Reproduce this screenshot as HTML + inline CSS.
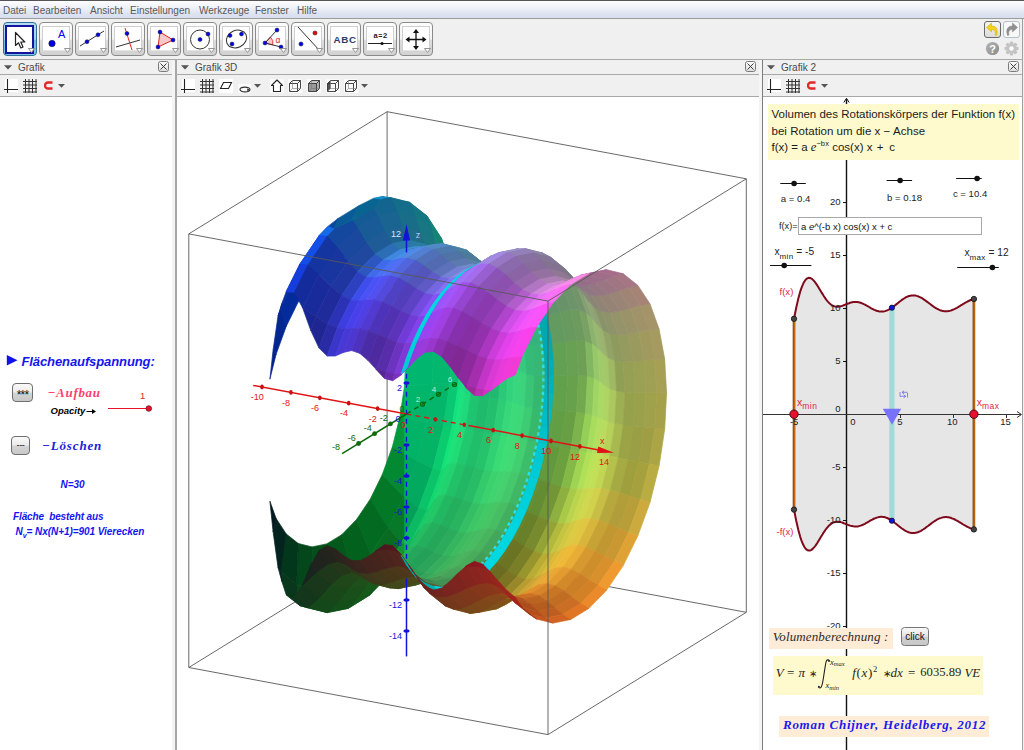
<!DOCTYPE html>
<html><head><meta charset="utf-8"><title>GeoGebra</title>
<style>
html,body{margin:0;padding:0;background:#fff;}
body{width:1024px;height:750px;position:relative;overflow:hidden;font-family:"Liberation Sans",sans-serif;}
.abs{position:absolute;}
#menubar{position:absolute;left:0;top:0;width:1024px;height:18px;background:linear-gradient(#fdfdfe 0px,#eef1f8 7px,#dfe4f1 12px,#d6dcec 18px);border-top:1px solid #555;box-sizing:border-box;}
#menubar span{position:absolute;top:3.5px;font-size:10px;color:#5a5a5a;white-space:nowrap;}
#menuline{position:absolute;left:0;top:18px;width:1024px;height:1px;background:#9c9c9c;}
#toolbar{position:absolute;left:0;top:19px;width:1024px;height:40px;background:#f0f0f0;}
.tb{position:absolute;top:3px;width:34px;height:34px;border:1px solid #8a8a8a;border-radius:4px;box-sizing:border-box;background:linear-gradient(#fdfdfd,#f4f4f4 50%,#dcdcdc 55%,#d2d2d2);}
.tb .in{position:absolute;left:2px;top:3px;width:26px;height:23px;background:#fff;border:1px solid #cfcfcf;border-bottom-color:#e4e4e4;box-sizing:content-box;}
.tb .in svg{position:absolute;left:0;top:0;}
.tb.sel{border-color:#2f6f98;background:linear-gradient(#b4dcf2,#9fd2ee 50%,#6cbce6 55%,#7cc4ea);}
.tb.sel .in{left:1px;top:2px;width:25px;height:25px;border:2px solid #14149c;background:#fff;}
.tb .tri{position:absolute;right:1px;bottom:2px;}
.pt{position:absolute;top:60px;height:14px;background:#f0f0f0;}
.pt span{position:absolute;left:18px;top:1px;font-size:10px;color:#4a4a4a;line-height:14px;}
.pt .dd{position:absolute;left:4px;top:5px;}
.pt .cl{position:absolute;top:1px;width:11px;height:11px;border:1px solid #7a7a7a;border-radius:2.5px;box-sizing:border-box;background:linear-gradient(#fbfbfb,#dedede);}
.pt .cl svg{position:absolute;left:0;top:0;}
.si{position:absolute;top:79px;}
.hline{position:absolute;height:1px;background:#a8a8a8;}
.vline{position:absolute;width:1px;background:#a8a8a8;}
.sb{position:absolute;top:75px;height:21px;background:#f0f0f0;}
</style></head><body>
<div id="menubar">
<span style="left:3px">Datei</span><span style="left:33px">Bearbeiten</span><span style="left:90px">Ansicht</span><span style="left:130px">Einstellungen</span><span style="left:199px">Werkzeuge</span><span style="left:255px">Fenster</span><span style="left:297px">Hilfe</span>
</div>
<div id="menuline"></div>
<div id="toolbar">
<div class="tb sel" style="left:2.5px"><div class="in"><svg width="24" height="26" viewBox="0 0 24 26"><path d="M8.5 5.5V18.5L11.5 15.8L13.8 21L16 20L13.8 15H17.8Z" fill="#fff" stroke="#222" stroke-width="1.2" stroke-linejoin="round"/></svg></div><svg class="tri" width="7" height="5" viewBox="0 0 7 5"><path d="M0.5 0.5H6.5L3.5 4.5Z" fill="#fff" stroke="#888" stroke-width="0.9"/></svg></div>
<div class="tb" style="left:38.5px"><div class="in"><svg width="26" height="24" viewBox="0 0 26 24"><circle cx="9" cy="16.5" r="3.2" fill="#0000ee" stroke="#222" stroke-width="0.6"/><text x="15" y="10.5" font-family="Liberation Sans" font-size="11" fill="#0000ee">A</text></svg></div><svg class="tri" width="7" height="5" viewBox="0 0 7 5"><path d="M0.5 0.5H6.5L3.5 4.5Z" fill="#fff" stroke="#888" stroke-width="0.9"/></svg></div>
<div class="tb" style="left:74.5px"><div class="in"><svg width="26" height="24" viewBox="0 0 26 24"><path d="M1 19L25 4" stroke="#333" stroke-width="1"/><circle cx="8" cy="14.7" r="2" fill="#0000ee" stroke="#222" stroke-width="0.5"/><circle cx="19" cy="7.8" r="2" fill="#0000ee" stroke="#222" stroke-width="0.5"/></svg></div><svg class="tri" width="7" height="5" viewBox="0 0 7 5"><path d="M0.5 0.5H6.5L3.5 4.5Z" fill="#fff" stroke="#888" stroke-width="0.9"/></svg></div>
<div class="tb" style="left:110.5px"><div class="in"><svg width="26" height="24" viewBox="0 0 26 24"><path d="M1 20L25 13" stroke="#333" stroke-width="1"/><path d="M10 1L17 23" stroke="#ee2222" stroke-width="1"/><circle cx="12" cy="6.5" r="2" fill="#0000ee" stroke="#222" stroke-width="0.5"/></svg></div><svg class="tri" width="7" height="5" viewBox="0 0 7 5"><path d="M0.5 0.5H6.5L3.5 4.5Z" fill="#fff" stroke="#888" stroke-width="0.9"/></svg></div>
<div class="tb" style="left:146.5px"><div class="in"><svg width="26" height="24" viewBox="0 0 26 24"><path d="M9 5L22 13L7 20Z" fill="#f6c8c8" stroke="#dd2222" stroke-width="1"/><circle cx="9" cy="5" r="2" fill="#0000ee" stroke="#222" stroke-width="0.5"/><circle cx="22" cy="13" r="2" fill="#0000ee" stroke="#222" stroke-width="0.5"/><circle cx="7" cy="20" r="2" fill="#0000ee" stroke="#222" stroke-width="0.5"/></svg></div><svg class="tri" width="7" height="5" viewBox="0 0 7 5"><path d="M0.5 0.5H6.5L3.5 4.5Z" fill="#fff" stroke="#888" stroke-width="0.9"/></svg></div>
<div class="tb" style="left:182.5px"><div class="in"><svg width="26" height="24" viewBox="0 0 26 24"><circle cx="13" cy="12.5" r="9.5" fill="none" stroke="#333" stroke-width="1"/><circle cx="13" cy="12.5" r="2" fill="#0000ee" stroke="#222" stroke-width="0.5"/><circle cx="21" cy="7" r="2" fill="#0000ee" stroke="#222" stroke-width="0.5"/></svg></div><svg class="tri" width="7" height="5" viewBox="0 0 7 5"><path d="M0.5 0.5H6.5L3.5 4.5Z" fill="#fff" stroke="#888" stroke-width="0.9"/></svg></div>
<div class="tb" style="left:218.5px"><div class="in"><svg width="26" height="24" viewBox="0 0 26 24"><ellipse cx="13.5" cy="12" rx="10.5" ry="8.5" transform="rotate(-25 13.5 12)" fill="none" stroke="#333" stroke-width="1"/><circle cx="9" cy="17" r="2" fill="#0000ee" stroke="#222" stroke-width="0.5"/><circle cx="18.5" cy="7" r="2" fill="#0000ee" stroke="#222" stroke-width="0.5"/><circle cx="7" cy="8.5" r="2" fill="#0000ee" stroke="#222" stroke-width="0.5"/></svg></div><svg class="tri" width="7" height="5" viewBox="0 0 7 5"><path d="M0.5 0.5H6.5L3.5 4.5Z" fill="#fff" stroke="#888" stroke-width="0.9"/></svg></div>
<div class="tb" style="left:254.5px"><div class="in"><svg width="26" height="24" viewBox="0 0 26 24"><path d="M6 16L11.4 10.1A8 8 0 0 1 13.8 17.9Z" fill="#f6c8c8" stroke="#dd2222" stroke-width="0.8"/><path d="M18 3L6 16L22 20" fill="none" stroke="#333" stroke-width="1"/><circle cx="18" cy="3" r="2" fill="#0000ee" stroke="#222" stroke-width="0.5"/><circle cx="6" cy="16" r="2" fill="#0000ee" stroke="#222" stroke-width="0.5"/><circle cx="22" cy="20" r="2" fill="#0000ee" stroke="#222" stroke-width="0.5"/><text x="16.5" y="15.5" font-family="Liberation Sans" font-size="8.5" fill="#dd2222">α</text></svg></div><svg class="tri" width="7" height="5" viewBox="0 0 7 5"><path d="M0.5 0.5H6.5L3.5 4.5Z" fill="#fff" stroke="#888" stroke-width="0.9"/></svg></div>
<div class="tb" style="left:290.5px"><div class="in"><svg width="26" height="24" viewBox="0 0 26 24"><path d="M3 0L25 24" stroke="#333" stroke-width="1"/><circle cx="20" cy="6" r="2.1" fill="#ee0000" stroke="#222" stroke-width="0.5"/><circle cx="6" cy="17" r="2.1" fill="#0000ee" stroke="#222" stroke-width="0.5"/></svg></div><svg class="tri" width="7" height="5" viewBox="0 0 7 5"><path d="M0.5 0.5H6.5L3.5 4.5Z" fill="#fff" stroke="#888" stroke-width="0.9"/></svg></div>
<div class="tb" style="left:326.5px"><div class="in"><svg width="26" height="24" viewBox="0 0 26 24"><text x="2.5" y="16" font-family="Liberation Sans" font-size="9.8" font-weight="bold" fill="#2c3a68" letter-spacing="0.7">ABC</text></svg></div><svg class="tri" width="7" height="5" viewBox="0 0 7 5"><path d="M0.5 0.5H6.5L3.5 4.5Z" fill="#fff" stroke="#888" stroke-width="0.9"/></svg></div>
<div class="tb" style="left:362.5px"><div class="in"><svg width="26" height="24" viewBox="0 0 26 24"><text x="6.5" y="11" font-family="Liberation Sans" font-size="7.5" font-weight="bold" fill="#222">a</text><text x="11.3" y="10.5" font-family="Liberation Sans" font-size="7" font-weight="bold" fill="#222">=</text><text x="16" y="11" font-family="Liberation Sans" font-size="7.5" font-weight="bold" fill="#222">2</text><path d="M1 16.5H25" stroke="#222" stroke-width="1"/><circle cx="15" cy="16.5" r="1.6" fill="#111"/></svg></div><svg class="tri" width="7" height="5" viewBox="0 0 7 5"><path d="M0.5 0.5H6.5L3.5 4.5Z" fill="#fff" stroke="#888" stroke-width="0.9"/></svg></div>
<div class="tb" style="left:398.5px"><div class="in"><svg width="26" height="24" viewBox="0 0 26 24"><path d="M13 4V21M4.5 12.5H21.5" stroke="#111" stroke-width="1.3"/><path d="M13 2L16 6H10ZM13 23L16 19H10ZM2.5 12.5L6.5 9.5V15.5ZM23.5 12.5L19.5 9.5V15.5Z" fill="#111"/></svg></div><svg class="tri" width="7" height="5" viewBox="0 0 7 5"><path d="M0.5 0.5H6.5L3.5 4.5Z" fill="#fff" stroke="#888" stroke-width="0.9"/></svg></div>

<div class="abs" style="left:984px;top:2px;width:17px;height:17px;border:1px solid #6a6a6a;border-radius:3px;box-sizing:border-box;background:linear-gradient(#f6f6f6,#dcdcdc)"></div>
<svg class="abs" style="left:985px;top:3px" width="15" height="15" viewBox="0 0 15 15"><path d="M1.5 5.5L6.5 1V4C11 4 13.5 7 11.5 13.5L10 13C11 9.5 9.5 7.6 6.5 7.6V10Z" fill="#f2d21c" stroke="#d8b400" stroke-width="0.6" stroke-linejoin="round"/></svg>
<div class="abs" style="left:1003px;top:2px;width:17px;height:17px;border:1px solid #b4c0c8;border-radius:3px;box-sizing:border-box;background:#f8f8f8"></div>
<svg class="abs" style="left:1004px;top:3px" width="15" height="15" viewBox="0 0 15 15"><path d="M13.5 5.5L8.5 1V4C4 4 1.5 7 3.5 13.5L5 13C4 9.5 5.5 7.6 8.5 7.6V10Z" fill="#909090" stroke="#858585" stroke-width="0.5" stroke-linejoin="round"/></svg>
<svg class="abs" style="left:985px;top:22px" width="15" height="15" viewBox="0 0 15 15"><defs><linearGradient id="hg" x1="0" y1="0" x2="1" y2="1"><stop offset="0" stop-color="#b4b4b4"/><stop offset="1" stop-color="#8a8a8a"/></linearGradient></defs><circle cx="7.5" cy="7.5" r="6.6" fill="url(#hg)"/><text x="7.5" y="11.6" text-anchor="middle" font-family="Liberation Sans" font-weight="bold" font-size="11" fill="#fff">?</text></svg>
<svg class="abs" style="left:1004px;top:22px" width="15" height="15" viewBox="0 0 15 15"><g transform="translate(7.5 7.5)"><g fill="#c4c4c4"><rect x="-1.7" y="-7" width="3.4" height="14" rx="1"/><rect x="-1.7" y="-7" width="3.4" height="14" rx="1" transform="rotate(45)"/><rect x="-1.7" y="-7" width="3.4" height="14" rx="1" transform="rotate(90)"/><rect x="-1.7" y="-7" width="3.4" height="14" rx="1" transform="rotate(135)"/><circle r="5"/></g><circle r="2.2" fill="#fdfdfd"/></g></svg>

</div>
<!-- panels frame -->
<div class="abs" style="left:0;top:59px;width:1024px;height:691px;background:#f0f0f0"></div>
<div class="hline" style="left:0;top:59px;width:1024px"></div>
<!-- left panel -->
<div class="pt" style="left:0px;width:172px"><svg class="dd" width="8" height="5" viewBox="0 0 8 5"><path d="M0 0.3H8L4 4.6Z" fill="#555"/></svg><span>Grafik</span><div class="cl" style="left:158px"><svg width="9" height="9" viewBox="0 0 9 9"><path d="M1.5 1.5L7.5 7.5M7.5 1.5L1.5 7.5" stroke="#333" stroke-width="0.95"/></svg></div></div><div class="hline" style="left:0px;top:74px;width:172px"></div><div class="sb" style="left:0px;width:172px"></div><svg class="si" style="left:4px" width="14" height="14" viewBox="0 0 14 14"><rect x="1" y="0" width="13" height="13" fill="#fff"/><path d="M3.5 0V14M0 10.5H14" stroke="#222" stroke-width="1.1" fill="none"/></svg><svg class="si" style="left:23px" width="14" height="14" viewBox="0 0 14 14"><path d="M2.5 0V14M6 0V14M9.5 0V14M13 0V14M0 2.5H14M0 6H14M0 9.5H14M0 13H14" stroke="#333" stroke-width="1" fill="none"/></svg><svg class="si" style="left:44px;top:81px" width="9" height="9" viewBox="0 0 9 9"><path d="M8.5 1.5H4A3 3 0 0 0 4 7.5H8.5" stroke="#e02a2a" stroke-width="2.3" fill="none"/></svg><svg class="si" style="left:58px;top:84px" width="7" height="4" viewBox="0 0 7 4"><path d="M0 0H7L3.5 3.8Z" fill="#555"/></svg><div class="hline" style="left:0px;top:96px;width:172px"></div><div class="abs" style="left:0px;top:97px;width:172px;height:653px;background:#fff;overflow:hidden"><div class="abs" style="left:0;top:-97px;width:1024px;height:750px;">
<style>
.bi{position:absolute;font-weight:bold;font-style:italic;color:#1414f0;white-space:nowrap;line-height:1;}
.btn{position:absolute;border:1px solid #6e6e6e;border-radius:4px;box-sizing:border-box;background:linear-gradient(#fafafa,#ececec 45%,#d4d4d4 55%,#c8c8c8);font-size:9px;color:#111;text-align:center;}
</style>
<svg class="abs" style="left:6px;top:354px" width="13" height="13" viewBox="0 0 13 13"><path d="M0.8 1L11.5 6.3L0.8 11.6Z" fill="#1010f0"/></svg>
<div class="bi" style="left:21.5px;top:354.9px;font-size:13px;letter-spacing:-0.1px">Flächenaufspannung:</div>
<div class="btn" style="left:12px;top:383px;width:21px;height:19px;line-height:22px;font-size:12px;letter-spacing:-0.8px">***</div>
<div class="abs" style="left:47.5px;top:385.8px;font-family:'Liberation Serif',serif;font-weight:bold;font-style:italic;font-size:13px;letter-spacing:0.7px;color:#ff3f6e;line-height:1;white-space:nowrap">−Aufbau</div>
<div class="abs" style="left:140px;top:390.5px;font-size:9.5px;color:#e02828;line-height:1">1</div>
<div class="abs" style="left:50.5px;top:406px;font-weight:bold;font-style:italic;font-size:9.5px;color:#000;line-height:1;white-space:nowrap">Opacity</div>
<svg class="abs" style="left:85.5px;top:408.2px" width="11" height="7" viewBox="0 0 11 7"><path d="M0.5 3.5H7" stroke="#000" stroke-width="1"/><path d="M6 1L10 3.5L6 6Z" fill="#000"/></svg>
<svg class="abs" style="left:105px;top:403px" width="50" height="11" viewBox="0 0 50 11"><path d="M3 5.5H44" stroke="#e8142c" stroke-width="1"/><circle cx="43.8" cy="5.5" r="2.8" fill="#ea1030" stroke="#5a1018" stroke-width="0.7"/></svg>
<div class="btn" style="left:11px;top:436px;width:19px;height:19px;line-height:17px;letter-spacing:-0.3px">---</div>
<div class="abs" style="left:42px;top:439.2px;font-family:'Liberation Serif',serif;font-weight:bold;font-style:italic;font-size:13px;letter-spacing:0.85px;color:#2222d8;line-height:1;white-space:nowrap">−Löschen</div>
<div class="bi" style="left:60.5px;top:479.5px;font-size:10px">N=30</div>
<div class="bi" style="left:13px;top:511.5px;font-size:10px;letter-spacing:-0.13px">Fläche&nbsp; besteht aus</div>
<div class="bi" style="left:15.5px;top:526.5px;font-size:10px;letter-spacing:-0.05px">N<span style="font-size:7px;position:relative;top:3px">v</span>= Nx(N+1)=901 Vierecken</div>
</div>
</div><div class="abs" style="left:172px;top:60px;width:3px;height:690px;background:#f4f4f4"></div><div class="abs" style="left:175px;top:60px;width:2px;height:690px;background:#a6a6a6"></div>
<!-- center panel -->
<div class="pt" style="left:177px;width:582px"><svg class="dd" width="8" height="5" viewBox="0 0 8 5"><path d="M0 0.3H8L4 4.6Z" fill="#555"/></svg><span>Grafik 3D</span><div class="cl" style="left:568px"><svg width="9" height="9" viewBox="0 0 9 9"><path d="M1.5 1.5L7.5 7.5M7.5 1.5L1.5 7.5" stroke="#333" stroke-width="0.95"/></svg></div></div><div class="hline" style="left:177px;top:74px;width:582px"></div><div class="sb" style="left:177px;width:582px"></div><svg class="si" style="left:181px" width="14" height="14" viewBox="0 0 14 14"><rect x="1" y="0" width="13" height="13" fill="#fff"/><path d="M3.5 0V14M0 10.5H14" stroke="#222" stroke-width="1.1" fill="none"/></svg><svg class="si" style="left:200px" width="14" height="14" viewBox="0 0 14 14"><path d="M2.5 0V14M6 0V14M9.5 0V14M13 0V14M0 2.5H14M0 6H14M0 9.5H14M0 13H14" stroke="#333" stroke-width="1" fill="none"/></svg><svg class="si" style="left:219px" width="14" height="14" viewBox="0 0 14 14"><rect width="14" height="14" fill="#fff"/><path d="M4.5 3.5H12.5L9.5 9.5H1.5Z" fill="none" stroke="#222" stroke-width="1.1"/></svg><svg class="si" style="left:238px" width="14" height="14" viewBox="0 0 14 14"><rect y="5" width="13" height="9" fill="#fafafa"/><ellipse cx="7" cy="10.5" rx="5" ry="2.4" fill="none" stroke="#333" stroke-width="1.1"/><path d="M9 9.5L12 10.5L9.5 12.5Z" fill="#333"/></svg><svg class="si" style="left:254px;top:84px" width="7" height="4" viewBox="0 0 7 4"><path d="M0 0H7L3.5 3.8Z" fill="#555"/></svg><svg class="si" style="left:270px" width="14" height="14" viewBox="0 0 14 14"><rect width="14" height="14" fill="#fafafa"/><path d="M1.5 6.5L7 1L12.5 6.5H10.5V12.5H3.5V6.5Z" fill="#fff" stroke="#222" stroke-width="1.1" stroke-linejoin="round"/></svg><svg class="si" style="left:288px" width="14" height="14" viewBox="0 0 14 14"><rect width="14" height="14" fill="#fafafa"/><path d="M1.5 4.5H9.5V12.5H1.5ZM1.5 4.5L4.5 1.5H12.5V9.5L9.5 12.5M9.5 4.5L12.5 1.5" fill="none" stroke="#333" stroke-width="0.9"/><path d="M4.5 1.5V9.5H12.5M4.5 9.5L1.5 12.5" fill="none" stroke="#777" stroke-width="0.6"/></svg><svg class="si" style="left:307px" width="14" height="14" viewBox="0 0 14 14"><rect width="14" height="14" fill="#fafafa"/><path d="M1.5 4.5H9.5V12.5H1.5Z" fill="#9a9a9a"/><path d="M1.5 4.5L4.5 1.5H12.5L9.5 4.5Z" fill="#c8c8c8"/><path d="M9.5 4.5L12.5 1.5V9.5L9.5 12.5Z" fill="#b0b0b0"/><path d="M1.5 4.5H9.5V12.5H1.5ZM1.5 4.5L4.5 1.5H12.5V9.5L9.5 12.5M9.5 4.5L12.5 1.5" fill="none" stroke="#333" stroke-width="0.9"/><path d="M4.5 1.5V9.5H12.5M4.5 9.5L1.5 12.5" fill="none" stroke="#777" stroke-width="0.6"/></svg><svg class="si" style="left:326px" width="14" height="14" viewBox="0 0 14 14"><rect width="14" height="14" fill="#fafafa"/><path d="M1.5 4.5L4.5 1.5V9.5L1.5 12.5Z" fill="#555"/><path d="M1.5 4.5H9.5V12.5H1.5ZM1.5 4.5L4.5 1.5H12.5V9.5L9.5 12.5M9.5 4.5L12.5 1.5" fill="none" stroke="#333" stroke-width="0.9"/><path d="M4.5 1.5V9.5H12.5M4.5 9.5L1.5 12.5" fill="none" stroke="#777" stroke-width="0.6"/></svg><svg class="si" style="left:344px" width="14" height="14" viewBox="0 0 14 14"><rect width="14" height="14" fill="#fafafa"/><path d="M1.5 4.5H9.5V12.5H1.5ZM1.5 4.5L4.5 1.5H12.5V9.5L9.5 12.5M9.5 4.5L12.5 1.5" fill="none" stroke="#333" stroke-width="0.9"/><path d="M4.5 1.5V9.5H12.5M4.5 9.5L1.5 12.5" fill="none" stroke="#777" stroke-width="0.6"/></svg><svg class="si" style="left:361px;top:84px" width="7" height="4" viewBox="0 0 7 4"><path d="M0 0H7L3.5 3.8Z" fill="#555"/></svg><div class="hline" style="left:177px;top:96px;width:582px"></div><div class="abs" style="left:177px;top:97px;width:582px;height:653px;background:#fff;overflow:hidden"><div class="abs" style="left:-177px;top:-97px;width:1024px;height:750px;">
<svg class="abs" style="left:0;top:0" width="1024" height="750" viewBox="0 0 1024 750" font-family="Liberation Sans, sans-serif">
<path d="M387.1 545.2L746.3 612.3" stroke="#585858" stroke-width="0.9" fill="none"/>
<path d="M387.1 545.2L188.8 667.5" stroke="#585858" stroke-width="0.9" fill="none"/>
<path d="M387.1 545.2L387.1 111.7" stroke="#585858" stroke-width="0.9" fill="none"/>
<polygon points="399.9,416.8 426.2,422.8 432.1,383.8 404.5,386.2" fill="#039e44" stroke="#039e44" stroke-width="0.7"/>
<polygon points="392.4,446.7 416.6,461.0 426.2,422.8 399.9,416.8" fill="#03993c" stroke="#03993c" stroke-width="0.7"/>
<polygon points="404.5,386.2 432.1,383.8 434.1,345.5 406.1,356.2" fill="#03a14b" stroke="#03a14b" stroke-width="0.7"/>
<polygon points="382.3,474.6 403.8,496.5 416.6,461.0 392.4,446.7" fill="#038932" stroke="#038932" stroke-width="0.7"/>
<polygon points="406.1,356.2 434.1,345.5 432.1,309.7 404.5,328.1" fill="#03a054" stroke="#03a054" stroke-width="0.7"/>
<polygon points="370.2,499.2 388.3,527.9 403.8,496.5 382.3,474.6" fill="#037928" stroke="#037928" stroke-width="0.7"/>
<polygon points="404.5,328.1 432.1,309.7 426.2,278.0 399.9,303.3" fill="#039a5f" stroke="#039a5f" stroke-width="0.7"/>
<polygon points="356.5,519.6 370.8,553.9 388.3,527.9 370.2,499.2" fill="#036b21" stroke="#036b21" stroke-width="0.7"/>
<polygon points="399.9,303.3 426.2,278.0 416.6,251.7 392.4,282.6" fill="#03936a" stroke="#03936a" stroke-width="0.7"/>
<polygon points="341.8,534.7 352.0,573.2 370.8,553.9 356.5,519.6" fill="#03611e" stroke="#03611e" stroke-width="0.7"/>
<polygon points="392.4,282.6 416.6,251.7 403.8,231.9 382.3,267.1" fill="#038476" stroke="#038476" stroke-width="0.7"/>
<polygon points="326.7,543.9 332.9,585.0 352.0,573.2 341.8,534.7" fill="#03581b" stroke="#03581b" stroke-width="0.7"/>
<polygon points="382.3,267.1 403.8,231.9 388.3,219.6 370.2,257.5" fill="#037683" stroke="#037683" stroke-width="0.7"/>
<polygon points="312.0,546.9 314.1,588.8 332.9,585.0 326.7,543.9" fill="#034f1a" stroke="#034f1a" stroke-width="0.7"/>
<polygon points="370.2,257.5 388.3,219.6 370.8,215.3 356.5,254.1" fill="#036d89" stroke="#036d89" stroke-width="0.7"/>
<polygon points="298.3,543.5 296.6,584.4 314.1,588.8 312.0,546.9" fill="#03471a" stroke="#03471a" stroke-width="0.7"/>
<polygon points="356.5,254.1 370.8,215.3 352.0,219.1 341.8,257.1" fill="#036490" stroke="#036490" stroke-width="0.7"/>
<polygon points="286.2,533.9 281.1,572.1 296.6,584.4 298.3,543.5" fill="#03371b" stroke="#03371b" stroke-width="0.7"/>
<polygon points="341.8,257.1 352.0,219.1 332.9,230.9 326.7,266.3" fill="#035b96" stroke="#035b96" stroke-width="0.7"/>
<polygon points="276.1,518.4 273.1,531.7 278.0,567.4 281.1,572.1 286.2,533.9" fill="#03241e" stroke="#03241e" stroke-width="0.7"/>
<polygon points="273.1,531.7 276.1,518.4 269.9,501.2" fill="#031720" stroke="#031720" stroke-width="0.7"/>
<polygon points="326.7,266.3 332.9,230.9 314.1,250.2 312.0,281.4" fill="#03489e" stroke="#03489e" stroke-width="0.7"/>
<polygon points="312.0,281.4 314.1,250.2 296.6,276.1 298.3,301.8" fill="#03359f" stroke="#03359f" stroke-width="0.7"/>
<polygon points="298.3,301.8 296.6,276.1 281.1,307.5 286.2,326.4" fill="#032b9b" stroke="#032b9b" stroke-width="0.7"/>
<polygon points="276.1,354.3 273.1,349.9 269.9,379.2" fill="#032288" stroke="#032288" stroke-width="0.7"/>
<polygon points="286.2,326.4 281.1,307.5 278.0,316.1 273.1,349.9 276.1,354.3" fill="#032691" stroke="#032691" stroke-width="0.7"/>
<polygon points="426.2,422.8 443.4,426.6 449.9,383.3 432.1,383.8" fill="#089e44" stroke="#089e44" stroke-width="0.7"/>
<polygon points="416.6,461.0 432.8,468.8 443.4,426.6 426.2,422.8" fill="#08993c" stroke="#08993c" stroke-width="0.7"/>
<polygon points="432.1,383.8 449.9,383.3 452.1,341.0 434.1,345.5" fill="#08a14b" stroke="#08a14b" stroke-width="0.7"/>
<polygon points="403.8,496.5 418.6,508.2 432.8,468.8 416.6,461.0" fill="#088932" stroke="#088932" stroke-width="0.7"/>
<polygon points="434.1,345.5 452.1,341.0 449.9,301.3 432.1,309.7" fill="#08a054" stroke="#08a054" stroke-width="0.7"/>
<polygon points="388.3,527.9 401.4,543.0 418.6,508.2 403.8,496.5" fill="#087928" stroke="#087928" stroke-width="0.7"/>
<polygon points="432.1,309.7 449.9,301.3 443.4,266.2 426.2,278.0" fill="#089a5f" stroke="#089a5f" stroke-width="0.7"/>
<polygon points="370.8,553.9 382.0,571.8 401.4,543.0 388.3,527.9" fill="#086b21" stroke="#086b21" stroke-width="0.7"/>
<polygon points="426.2,278.0 443.4,266.2 432.8,237.0 416.6,251.7" fill="#08936a" stroke="#08936a" stroke-width="0.7"/>
<polygon points="352.0,573.2 361.2,593.1 382.0,571.8 370.8,553.9" fill="#08611e" stroke="#08611e" stroke-width="0.7"/>
<polygon points="416.6,251.7 432.8,237.0 418.6,215.1 403.8,231.9" fill="#088476" stroke="#088476" stroke-width="0.7"/>
<polygon points="332.9,585.0 340.0,606.2 361.2,593.1 352.0,573.2" fill="#08581b" stroke="#08581b" stroke-width="0.7"/>
<polygon points="403.8,231.9 418.6,215.1 401.4,201.5 388.3,219.6" fill="#087683" stroke="#087683" stroke-width="0.7"/>
<polygon points="314.1,588.8 319.3,610.4 340.0,606.2 332.9,585.0" fill="#084f1a" stroke="#084f1a" stroke-width="0.7"/>
<polygon points="388.3,219.6 401.4,201.5 382.0,196.7 370.8,215.3" fill="#086d89" stroke="#086d89" stroke-width="0.7"/>
<polygon points="296.6,584.4 299.9,605.6 319.3,610.4 314.1,588.8" fill="#08471a" stroke="#08471a" stroke-width="0.7"/>
<polygon points="370.8,215.3 382.0,196.7 373.3,198.4 358.8,205.7 352.0,219.1" fill="#086490" stroke="#086490" stroke-width="0.7"/>
<polygon points="281.1,572.1 281.8,581.4 286.2,594.8 299.9,605.6 296.6,584.4" fill="#08371b" stroke="#08371b" stroke-width="0.7"/>
<polygon points="281.8,581.4 281.1,572.1 278.0,567.4" fill="#08241e" stroke="#08241e" stroke-width="0.7"/>
<polygon points="352.0,219.1 358.8,205.7 338.1,218.4 332.9,230.9" fill="#085b96" stroke="#085b96" stroke-width="0.7"/>
<polygon points="332.9,230.9 338.1,218.4 327.9,226.4 319.3,235.4 314.1,250.2" fill="#08489e" stroke="#08489e" stroke-width="0.7"/>
<polygon points="314.1,250.2 319.3,235.4 299.9,264.1 296.6,276.1" fill="#08359f" stroke="#08359f" stroke-width="0.7"/>
<polygon points="296.6,276.1 299.9,264.1 286.2,291.7 281.8,303.5 281.1,307.5" fill="#082b9b" stroke="#082b9b" stroke-width="0.7"/>
<polygon points="281.1,307.5 281.8,303.5 278.0,316.1" fill="#082691" stroke="#082691" stroke-width="0.7"/>
<polygon points="443.4,426.6 451.8,428.2 458.4,384.8 449.9,383.3" fill="#10ba4f" stroke="#10ba4f" stroke-width="0.7"/>
<polygon points="432.8,468.8 441.2,470.6 451.8,428.2 443.4,426.6" fill="#12c04b" stroke="#12c04b" stroke-width="0.7"/>
<polygon points="449.9,383.3 458.4,384.8 460.6,342.3 452.1,341.0" fill="#0fb052" stroke="#0fb052" stroke-width="0.7"/>
<polygon points="418.6,508.2 427.0,510.1 441.2,470.6 432.8,468.8" fill="#12b541" stroke="#12b541" stroke-width="0.7"/>
<polygon points="452.1,341.0 460.6,342.3 458.4,302.6 449.9,301.3" fill="#0ea054" stroke="#0ea054" stroke-width="0.7"/>
<polygon points="401.4,543.0 409.7,545.0 427.0,510.1 418.6,508.2" fill="#13a536" stroke="#13a536" stroke-width="0.7"/>
<polygon points="449.9,301.3 458.4,302.6 451.8,267.3 443.4,266.2" fill="#0e9a5f" stroke="#0e9a5f" stroke-width="0.7"/>
<polygon points="382.0,571.8 390.3,573.8 409.7,545.0 401.4,543.0" fill="#14962e" stroke="#14962e" stroke-width="0.7"/>
<polygon points="443.4,266.2 451.8,267.3 441.2,238.0 432.8,237.0" fill="#0e936a" stroke="#0e936a" stroke-width="0.7"/>
<polygon points="361.2,593.1 369.5,595.2 390.3,573.8 382.0,571.8" fill="#148a2a" stroke="#148a2a" stroke-width="0.7"/>
<polygon points="432.8,237.0 441.2,238.0 427.0,216.1 418.6,215.1" fill="#0e8476" stroke="#0e8476" stroke-width="0.7"/>
<polygon points="340.0,606.2 348.2,608.4 369.5,595.2 361.2,593.1" fill="#147b26" stroke="#147b26" stroke-width="0.7"/>
<polygon points="418.6,215.1 427.0,216.1 409.7,202.4 401.4,201.5" fill="#0e7683" stroke="#0e7683" stroke-width="0.7"/>
<polygon points="319.3,610.4 327.3,612.6 348.2,608.4 340.0,606.2" fill="#136d24" stroke="#136d24" stroke-width="0.7"/>
<polygon points="401.4,201.5 409.7,202.4 390.3,197.6 382.0,196.7" fill="#0e6d89" stroke="#0e6d89" stroke-width="0.7"/>
<polygon points="299.9,605.6 307.9,607.8 327.3,612.6 319.3,610.4" fill="#135f22" stroke="#135f22" stroke-width="0.7"/>
<polygon points="382.0,196.7 390.3,197.6 383.0,199.1 373.3,198.4" fill="#1490cf" stroke="#1490cf" stroke-width="0.7"/>
<polygon points="294.4,597.1 307.9,607.8 299.9,605.6 286.2,594.8" fill="#0e371b" stroke="#0e371b" stroke-width="0.7"/>
<polygon points="334.6,228.9 327.3,236.4 319.3,235.4 327.9,226.4" fill="#156ae8" stroke="#156ae8" stroke-width="0.7"/>
<polygon points="319.3,235.4 327.3,236.4 307.9,265.2 299.9,264.1" fill="#144de8" stroke="#144de8" stroke-width="0.7"/>
<polygon points="299.9,264.1 307.9,265.2 294.4,292.5 286.2,291.7" fill="#143ddc" stroke="#143ddc" stroke-width="0.7"/>
<polygon points="451.8,428.2 454.8,428.4 461.0,387.5 458.4,384.8" fill="#1ce562" stroke="#1ce562" stroke-width="0.7"/>
<polygon points="441.2,470.6 444.7,468.4 454.8,428.4 451.8,428.2" fill="#1de659" stroke="#1de659" stroke-width="0.7"/>
<polygon points="458.4,384.8 461.0,387.5 463.1,347.4 460.6,342.3" fill="#1be269" stroke="#1be269" stroke-width="0.7"/>
<polygon points="427.0,510.1 431.3,505.7 444.7,468.4 441.2,470.6" fill="#1ed34c" stroke="#1ed34c" stroke-width="0.7"/>
<polygon points="460.6,342.3 463.1,347.4 461.0,309.9 458.4,302.6" fill="#1ad771" stroke="#1ad771" stroke-width="0.7"/>
<polygon points="409.7,545.0 415.0,538.6 431.3,505.7 427.0,510.1" fill="#1fbe3e" stroke="#1fbe3e" stroke-width="0.7"/>
<polygon points="458.4,302.6 461.0,309.9 454.8,276.6 451.8,267.3" fill="#19c57a" stroke="#19c57a" stroke-width="0.7"/>
<polygon points="390.3,573.8 396.7,565.8 415.0,538.6 409.7,545.0" fill="#1faa34" stroke="#1faa34" stroke-width="0.7"/>
<polygon points="451.8,267.3 454.8,276.6 444.7,249.0 441.2,238.0" fill="#14936a" stroke="#14936a" stroke-width="0.7"/>
<polygon points="369.5,595.2 377.0,586.0 396.7,565.8 390.3,573.8" fill="#14611e" stroke="#14611e" stroke-width="0.7"/>
<polygon points="441.2,238.0 444.7,249.0 431.3,228.3 427.0,216.1" fill="#148476" stroke="#148476" stroke-width="0.7"/>
<polygon points="348.2,608.4 357.0,598.4 377.0,586.0 369.5,595.2" fill="#14581b" stroke="#14581b" stroke-width="0.7"/>
<polygon points="427.0,216.1 431.3,228.3 415.0,215.4 409.7,202.4" fill="#147683" stroke="#147683" stroke-width="0.7"/>
<polygon points="327.3,612.6 337.3,602.4 357.0,598.4 348.2,608.4" fill="#144f1a" stroke="#144f1a" stroke-width="0.7"/>
<polygon points="409.7,202.4 415.0,215.4 396.7,210.8 390.3,197.6" fill="#146d89" stroke="#146d89" stroke-width="0.7"/>
<polygon points="307.9,607.8 319.0,597.9 337.3,602.4 327.3,612.6" fill="#14471a" stroke="#14471a" stroke-width="0.7"/>
<polygon points="390.3,197.6 396.7,210.8 377.0,214.8 373.3,208.4 383.0,199.1" fill="#146490" stroke="#146490" stroke-width="0.7"/>
<polygon points="302.4,585.2 302.7,585.0 319.0,597.9 307.9,607.8 294.4,597.1" fill="#14371b" stroke="#14371b" stroke-width="0.7"/>
<polygon points="302.6,584.8 302.7,585.0 302.4,585.2" fill="#14241e" stroke="#14241e" stroke-width="0.7"/>
<polygon points="373.3,208.4 377.0,214.8 357.0,227.2 352.6,221.1" fill="#145b96" stroke="#145b96" stroke-width="0.7"/>
<polygon points="352.6,221.1 357.0,227.2 337.3,247.4 327.3,236.4 334.6,228.9" fill="#14489e" stroke="#14489e" stroke-width="0.7"/>
<polygon points="327.3,236.4 337.3,247.4 319.0,274.6 307.9,265.2" fill="#14359f" stroke="#14359f" stroke-width="0.7"/>
<polygon points="307.9,265.2 319.0,274.6 302.7,307.6 302.4,307.4 294.4,292.5" fill="#142b9b" stroke="#142b9b" stroke-width="0.7"/>
<polygon points="302.4,307.4 302.7,307.6 302.6,307.8" fill="#142691" stroke="#142691" stroke-width="0.7"/>
<polygon points="454.8,428.4 456.2,428.3 462.0,390.5 461.0,387.5" fill="#25e763" stroke="#25e763" stroke-width="0.7"/>
<polygon points="444.7,468.4 447.0,465.2 456.2,428.3 454.8,428.4" fill="#26e659" stroke="#26e659" stroke-width="0.7"/>
<polygon points="461.0,387.5 462.0,390.5 463.9,353.4 463.1,347.4" fill="#24e46a" stroke="#24e46a" stroke-width="0.7"/>
<polygon points="431.3,505.7 434.6,499.6 447.0,465.2 444.7,468.4" fill="#27d24c" stroke="#27d24c" stroke-width="0.7"/>
<polygon points="463.1,347.4 463.9,353.4 462.0,318.8 461.0,309.9" fill="#22db73" stroke="#22db73" stroke-width="0.7"/>
<polygon points="415.0,538.6 419.6,530.0 434.6,499.6 431.3,505.7" fill="#27bc3e" stroke="#27bc3e" stroke-width="0.7"/>
<polygon points="461.0,309.9 462.0,318.8 456.2,288.1 454.8,276.6" fill="#199a5f" stroke="#199a5f" stroke-width="0.7"/>
<polygon points="396.7,565.8 402.6,555.1 419.6,530.0 415.0,538.6" fill="#196b21" stroke="#196b21" stroke-width="0.7"/>
<polygon points="454.8,276.6 456.2,288.1 447.0,262.6 444.7,249.0" fill="#19936a" stroke="#19936a" stroke-width="0.7"/>
<polygon points="377.0,586.0 384.5,573.8 402.6,555.1 396.7,565.8" fill="#19611e" stroke="#19611e" stroke-width="0.7"/>
<polygon points="444.7,249.0 447.0,262.6 434.6,243.5 431.3,228.3" fill="#198476" stroke="#198476" stroke-width="0.7"/>
<polygon points="357.0,598.4 365.9,585.3 384.5,573.8 377.0,586.0" fill="#19581b" stroke="#19581b" stroke-width="0.7"/>
<polygon points="431.3,228.3 434.6,243.5 419.6,231.6 415.0,215.4" fill="#197683" stroke="#197683" stroke-width="0.7"/>
<polygon points="337.3,602.4 347.8,589.0 365.9,585.3 357.0,598.4" fill="#194f1a" stroke="#194f1a" stroke-width="0.7"/>
<polygon points="415.0,215.4 419.6,231.6 402.6,227.3 396.7,210.8" fill="#196d89" stroke="#196d89" stroke-width="0.7"/>
<polygon points="319.0,597.9 330.8,584.7 347.8,589.0 337.3,602.4" fill="#19471a" stroke="#19471a" stroke-width="0.7"/>
<polygon points="396.7,210.8 402.6,227.3 384.5,231.0 377.0,214.8" fill="#196490" stroke="#196490" stroke-width="0.7"/>
<polygon points="302.7,585.0 315.8,572.8 330.8,584.7 319.0,597.9" fill="#19371b" stroke="#19371b" stroke-width="0.7"/>
<polygon points="310.8,565.1 315.8,572.8 302.7,585.0 302.6,584.8" fill="#19241e" stroke="#19241e" stroke-width="0.7"/>
<polygon points="377.0,214.8 384.5,231.0 365.9,242.5 357.0,227.2" fill="#195b96" stroke="#195b96" stroke-width="0.7"/>
<polygon points="357.0,227.2 365.9,242.5 347.8,261.2 337.3,247.4" fill="#19489e" stroke="#19489e" stroke-width="0.7"/>
<polygon points="337.3,247.4 347.8,261.2 330.8,286.3 319.0,274.6" fill="#19359f" stroke="#19359f" stroke-width="0.7"/>
<polygon points="319.0,274.6 330.8,286.3 315.8,316.7 302.7,307.6" fill="#192b9b" stroke="#192b9b" stroke-width="0.7"/>
<polygon points="302.7,307.6 315.8,316.7 310.8,330.6 302.6,307.8" fill="#192691" stroke="#192691" stroke-width="0.7"/>
<polygon points="456.2,428.3 459.4,428.5 464.8,393.1 462.0,390.5" fill="#2de562" stroke="#2de562" stroke-width="0.7"/>
<polygon points="447.0,465.2 450.7,463.2 459.4,428.5 456.2,428.3" fill="#2ee659" stroke="#2ee659" stroke-width="0.7"/>
<polygon points="462.0,390.5 464.8,393.1 466.6,358.4 463.9,353.4" fill="#2be169" stroke="#2be169" stroke-width="0.7"/>
<polygon points="434.6,499.6 439.0,495.4 450.7,463.2 447.0,465.2" fill="#2fd34c" stroke="#2fd34c" stroke-width="0.7"/>
<polygon points="463.9,353.4 466.6,358.4 464.8,325.9 462.0,318.8" fill="#29d671" stroke="#29d671" stroke-width="0.7"/>
<polygon points="419.6,530.0 425.0,524.0 439.0,495.4 434.6,499.6" fill="#30be3e" stroke="#30be3e" stroke-width="0.7"/>
<polygon points="462.0,318.8 464.8,325.9 459.4,297.1 456.2,288.1" fill="#27c479" stroke="#27c479" stroke-width="0.7"/>
<polygon points="402.6,555.1 409.1,547.5 425.0,524.0 419.6,530.0" fill="#31ab34" stroke="#31ab34" stroke-width="0.7"/>
<polygon points="456.2,288.1 459.4,297.1 450.7,273.2 447.0,262.6" fill="#1f936a" stroke="#1f936a" stroke-width="0.7"/>
<polygon points="384.5,573.8 392.1,565.0 409.1,547.5 402.6,555.1" fill="#1f611e" stroke="#1f611e" stroke-width="0.7"/>
<polygon points="447.0,262.6 450.7,273.2 439.0,255.3 434.6,243.5" fill="#1f8476" stroke="#1f8476" stroke-width="0.7"/>
<polygon points="365.9,585.3 374.7,575.7 392.1,565.0 384.5,573.8" fill="#1f581b" stroke="#1f581b" stroke-width="0.7"/>
<polygon points="434.6,243.5 439.0,255.3 425.0,244.1 419.6,231.6" fill="#1f7683" stroke="#1f7683" stroke-width="0.7"/>
<polygon points="347.8,589.0 357.7,579.2 374.7,575.7 365.9,585.3" fill="#1f4f1a" stroke="#1f4f1a" stroke-width="0.7"/>
<polygon points="419.6,231.6 425.0,244.1 409.1,240.2 402.6,227.3" fill="#1f6d89" stroke="#1f6d89" stroke-width="0.7"/>
<polygon points="330.8,584.7 341.8,575.3 357.7,579.2 347.8,589.0" fill="#1f471a" stroke="#1f471a" stroke-width="0.7"/>
<polygon points="402.6,227.3 409.1,240.2 392.1,243.6 384.5,231.0" fill="#1f6490" stroke="#1f6490" stroke-width="0.7"/>
<polygon points="315.8,572.8 327.7,564.1 341.8,575.3 330.8,584.7" fill="#1f371b" stroke="#1f371b" stroke-width="0.7"/>
<polygon points="384.5,231.0 392.1,243.6 374.7,254.3 365.9,242.5" fill="#1f5b96" stroke="#1f5b96" stroke-width="0.7"/>
<polygon points="319.0,550.6 327.7,564.1 315.8,572.8 310.8,565.1" fill="#1f241e" stroke="#1f241e" stroke-width="0.7"/>
<polygon points="365.9,242.5 374.7,254.3 357.7,271.9 347.8,261.2" fill="#1f489e" stroke="#1f489e" stroke-width="0.7"/>
<polygon points="347.8,261.2 357.7,271.9 341.8,295.4 330.8,286.3" fill="#1f359f" stroke="#1f359f" stroke-width="0.7"/>
<polygon points="330.8,286.3 341.8,295.4 327.7,323.9 315.8,316.7" fill="#1f2b9b" stroke="#1f2b9b" stroke-width="0.7"/>
<polygon points="315.8,316.7 327.7,323.9 319.0,348.1 310.8,330.6" fill="#1f2691" stroke="#1f2691" stroke-width="0.7"/>
<polygon points="459.4,428.5 465.5,429.6 470.8,395.1 464.8,393.1" fill="#32d85c" stroke="#32d85c" stroke-width="0.7"/>
<polygon points="450.7,463.2 457.1,463.3 465.5,429.6 459.4,428.5" fill="#34dc56" stroke="#34dc56" stroke-width="0.7"/>
<polygon points="464.8,393.1 470.8,395.1 472.5,361.3 466.6,358.4" fill="#2fd061" stroke="#2fd061" stroke-width="0.7"/>
<polygon points="439.0,495.4 445.7,494.7 457.1,463.3 450.7,463.2" fill="#36cd4a" stroke="#36cd4a" stroke-width="0.7"/>
<polygon points="466.6,358.4 472.5,361.3 470.8,329.7 464.8,325.9" fill="#2cc166" stroke="#2cc166" stroke-width="0.7"/>
<polygon points="425.0,524.0 432.0,522.4 445.7,494.7 439.0,495.4" fill="#38ba3d" stroke="#38ba3d" stroke-width="0.7"/>
<polygon points="464.8,325.9 470.8,329.7 465.5,301.7 459.4,297.1" fill="#29ad6b" stroke="#29ad6b" stroke-width="0.7"/>
<polygon points="409.1,547.5 416.6,545.3 432.0,522.4 425.0,524.0" fill="#39a833" stroke="#39a833" stroke-width="0.7"/>
<polygon points="459.4,297.1 465.5,301.7 457.1,278.4 450.7,273.2" fill="#26996e" stroke="#26996e" stroke-width="0.7"/>
<polygon points="392.1,565.0 400.0,562.4 416.6,545.3 409.1,547.5" fill="#3a9a2f" stroke="#3a9a2f" stroke-width="0.7"/>
<polygon points="450.7,273.2 457.1,278.4 445.7,261.0 439.0,255.3" fill="#248476" stroke="#248476" stroke-width="0.7"/>
<polygon points="374.7,575.7 383.1,572.8 400.0,562.4 392.1,565.0" fill="#398a2a" stroke="#398a2a" stroke-width="0.7"/>
<polygon points="439.0,255.3 445.7,261.0 432.0,250.1 425.0,244.1" fill="#288190" stroke="#288190" stroke-width="0.7"/>
<polygon points="357.7,579.2 366.6,576.2 383.1,572.8 374.7,575.7" fill="#244f1a" stroke="#244f1a" stroke-width="0.7"/>
<polygon points="425.0,244.1 432.0,250.1 416.6,246.2 409.1,240.2" fill="#2a7d9e" stroke="#2a7d9e" stroke-width="0.7"/>
<polygon points="341.8,575.3 351.1,572.3 366.6,576.2 357.7,579.2" fill="#24471a" stroke="#24471a" stroke-width="0.7"/>
<polygon points="409.1,240.2 416.6,246.2 400.0,249.6 392.1,243.6" fill="#2b77ab" stroke="#2b77ab" stroke-width="0.7"/>
<polygon points="327.7,564.1 337.4,561.5 351.1,572.3 341.8,575.3" fill="#24371b" stroke="#24371b" stroke-width="0.7"/>
<polygon points="392.1,243.6 400.0,249.6 383.1,260.0 374.7,254.3" fill="#2c6eb5" stroke="#2c6eb5" stroke-width="0.7"/>
<polygon points="327.2,545.7 337.4,561.5 327.7,564.1 319.0,550.6" fill="#24241e" stroke="#24241e" stroke-width="0.7"/>
<polygon points="374.7,254.3 383.1,260.0 366.6,277.1 357.7,271.9" fill="#2c57c0" stroke="#2c57c0" stroke-width="0.7"/>
<polygon points="357.7,271.9 366.6,277.1 351.1,300.0 341.8,295.4" fill="#2c40c0" stroke="#2c40c0" stroke-width="0.7"/>
<polygon points="341.8,295.4 351.1,300.0 337.4,327.7 327.7,323.9" fill="#2b32b6" stroke="#2b32b6" stroke-width="0.7"/>
<polygon points="327.7,323.9 337.4,327.7 327.2,356.1 319.0,348.1" fill="#292ba4" stroke="#292ba4" stroke-width="0.7"/>
<polygon points="465.5,429.6 474.3,431.2 479.5,396.5 470.8,395.1" fill="#30b64e" stroke="#30b64e" stroke-width="0.7"/>
<polygon points="457.1,463.3 465.7,465.2 474.3,431.2 465.5,429.6" fill="#34bc49" stroke="#34bc49" stroke-width="0.7"/>
<polygon points="470.8,395.1 479.5,396.5 481.3,362.5 472.5,361.3" fill="#2dac50" stroke="#2dac50" stroke-width="0.7"/>
<polygon points="445.7,494.7 454.3,496.8 465.7,465.2 457.1,463.3" fill="#36b140" stroke="#36b140" stroke-width="0.7"/>
<polygon points="472.5,361.3 481.3,362.5 479.5,330.6 470.8,329.7" fill="#2aa054" stroke="#2aa054" stroke-width="0.7"/>
<polygon points="432.0,522.4 440.5,524.8 454.3,496.8 445.7,494.7" fill="#38a235" stroke="#38a235" stroke-width="0.7"/>
<polygon points="470.8,329.7 479.5,330.6 474.3,302.4 465.5,301.7" fill="#2a9a5f" stroke="#2a9a5f" stroke-width="0.7"/>
<polygon points="416.6,545.3 425.0,547.8 440.5,524.8 432.0,522.4" fill="#3a932d" stroke="#3a932d" stroke-width="0.7"/>
<polygon points="465.5,301.7 474.3,302.4 465.7,279.0 457.1,278.4" fill="#2a936a" stroke="#2a936a" stroke-width="0.7"/>
<polygon points="400.0,562.4 408.3,565.0 425.0,547.8 416.6,545.3" fill="#3a8729" stroke="#3a8729" stroke-width="0.7"/>
<polygon points="457.1,278.4 465.7,279.0 454.3,261.4 445.7,261.0" fill="#2a8476" stroke="#2a8476" stroke-width="0.7"/>
<polygon points="383.1,572.8 391.2,575.5 408.3,565.0 400.0,562.4" fill="#3a7925" stroke="#3a7925" stroke-width="0.7"/>
<polygon points="445.7,261.0 454.3,261.4 440.5,250.4 432.0,250.1" fill="#2a7683" stroke="#2a7683" stroke-width="0.7"/>
<polygon points="366.6,576.2 374.6,578.9 391.2,575.5 383.1,572.8" fill="#396b24" stroke="#396b24" stroke-width="0.7"/>
<polygon points="432.0,250.1 440.5,250.4 425.0,246.6 416.6,246.2" fill="#2a6d89" stroke="#2a6d89" stroke-width="0.7"/>
<polygon points="351.1,572.3 359.0,575.0 374.6,578.9 366.6,576.2" fill="#375d22" stroke="#375d22" stroke-width="0.7"/>
<polygon points="416.6,246.2 425.0,246.6 408.3,250.0 400.0,249.6" fill="#3e92d2" stroke="#3e92d2" stroke-width="0.7"/>
<polygon points="337.4,561.5 345.2,564.1 359.0,575.0 351.1,572.3" fill="#2a371b" stroke="#2a371b" stroke-width="0.7"/>
<polygon points="400.0,249.6 408.3,250.0 391.2,260.5 383.1,260.0" fill="#3f87df" stroke="#3f87df" stroke-width="0.7"/>
<polygon points="335.4,548.9 345.2,564.1 337.4,561.5 327.2,545.7" fill="#2a241e" stroke="#2a241e" stroke-width="0.7"/>
<polygon points="383.1,260.0 391.2,260.5 374.6,277.6 366.6,277.1" fill="#3f6beb" stroke="#3f6beb" stroke-width="0.7"/>
<polygon points="366.6,277.1 374.6,277.6 359.0,300.7 351.1,300.0" fill="#3e4eec" stroke="#3e4eec" stroke-width="0.7"/>
<polygon points="351.1,300.0 359.0,300.7 345.2,328.7 337.4,327.7" fill="#3d3ee0" stroke="#3d3ee0" stroke-width="0.7"/>
<polygon points="337.4,327.7 345.2,328.7 335.4,356.0 327.2,356.1" fill="#3b36cb" stroke="#3b36cb" stroke-width="0.7"/>
<polygon points="474.3,431.2 484.0,433.2 489.4,397.7 479.5,396.5" fill="#32a546" stroke="#32a546" stroke-width="0.7"/>
<polygon points="465.7,465.2 475.3,467.8 484.0,433.2 474.3,431.2" fill="#35ab42" stroke="#35ab42" stroke-width="0.7"/>
<polygon points="479.5,396.5 489.4,397.7 491.2,362.9 481.3,362.5" fill="#30a14b" stroke="#30a14b" stroke-width="0.7"/>
<polygon points="454.3,496.8 463.7,500.1 475.3,467.8 465.7,465.2" fill="#38a13a" stroke="#38a13a" stroke-width="0.7"/>
<polygon points="481.3,362.5 491.2,362.9 489.4,330.4 479.5,330.6" fill="#30a054" stroke="#30a054" stroke-width="0.7"/>
<polygon points="440.5,524.8 449.6,528.7 463.7,500.1 454.3,496.8" fill="#3a9330" stroke="#3a9330" stroke-width="0.7"/>
<polygon points="479.5,330.6 489.4,330.4 484.0,301.5 474.3,302.4" fill="#309a5f" stroke="#309a5f" stroke-width="0.7"/>
<polygon points="425.0,547.8 433.7,552.3 449.6,528.7 440.5,524.8" fill="#3c8629" stroke="#3c8629" stroke-width="0.7"/>
<polygon points="474.3,302.4 484.0,301.5 475.3,277.6 465.7,279.0" fill="#30936a" stroke="#30936a" stroke-width="0.7"/>
<polygon points="408.3,565.0 416.7,569.8 433.7,552.3 425.0,547.8" fill="#3c7b26" stroke="#3c7b26" stroke-width="0.7"/>
<polygon points="465.7,279.0 475.3,277.6 463.7,259.7 454.3,261.4" fill="#308476" stroke="#308476" stroke-width="0.7"/>
<polygon points="391.2,575.5 399.2,580.6 416.7,569.8 408.3,565.0" fill="#3c6e22" stroke="#3c6e22" stroke-width="0.7"/>
<polygon points="454.3,261.4 463.7,259.7 449.6,248.5 440.5,250.4" fill="#307683" stroke="#307683" stroke-width="0.7"/>
<polygon points="374.6,578.9 382.2,584.0 399.2,580.6 391.2,575.5" fill="#3b6220" stroke="#3b6220" stroke-width="0.7"/>
<polygon points="440.5,250.4 449.6,248.5 433.7,244.5 425.0,246.6" fill="#306d89" stroke="#306d89" stroke-width="0.7"/>
<polygon points="359.0,575.0 366.3,580.1 382.2,584.0 374.6,578.9" fill="#39551f" stroke="#39551f" stroke-width="0.7"/>
<polygon points="425.0,246.6 433.7,244.5 416.7,248.0 408.3,250.0" fill="#306490" stroke="#306490" stroke-width="0.7"/>
<polygon points="345.2,564.1 352.2,568.9 366.3,580.1 359.0,575.0" fill="#30371b" stroke="#30371b" stroke-width="0.7"/>
<polygon points="408.3,250.0 416.7,248.0 399.2,258.7 391.2,260.5" fill="#4a8ee9" stroke="#4a8ee9" stroke-width="0.7"/>
<polygon points="343.5,555.5 352.2,568.9 345.2,564.1 335.4,548.9" fill="#30241e" stroke="#30241e" stroke-width="0.7"/>
<polygon points="391.2,260.5 399.2,258.7 382.2,276.3 374.6,277.6" fill="#4a70f6" stroke="#4a70f6" stroke-width="0.7"/>
<polygon points="374.6,277.6 382.2,276.3 366.3,299.8 359.0,300.7" fill="#4a52f7" stroke="#4a52f7" stroke-width="0.7"/>
<polygon points="359.0,300.7 366.3,299.8 352.2,328.4 345.2,328.7" fill="#4841eb" stroke="#4841eb" stroke-width="0.7"/>
<polygon points="345.2,328.7 352.2,328.4 343.5,352.4 335.4,356.0" fill="#4639d6" stroke="#4639d6" stroke-width="0.7"/>
<polygon points="484.0,433.2 493.3,435.0 498.8,399.0 489.4,397.7" fill="#3aad4a" stroke="#3aad4a" stroke-width="0.7"/>
<polygon points="475.3,467.8 484.5,470.1 493.3,435.0 484.0,433.2" fill="#3eb346" stroke="#3eb346" stroke-width="0.7"/>
<polygon points="489.4,397.7 498.8,399.0 500.6,363.7 491.2,362.9" fill="#36a34c" stroke="#36a34c" stroke-width="0.7"/>
<polygon points="463.7,500.1 472.7,502.9 484.5,470.1 475.3,467.8" fill="#42a93d" stroke="#42a93d" stroke-width="0.7"/>
<polygon points="491.2,362.9 500.6,363.7 498.8,330.7 489.4,330.4" fill="#35a054" stroke="#35a054" stroke-width="0.7"/>
<polygon points="449.6,528.7 458.4,531.9 472.7,502.9 463.7,500.1" fill="#449b33" stroke="#449b33" stroke-width="0.7"/>
<polygon points="489.4,330.4 498.8,330.7 493.3,301.5 484.0,301.5" fill="#359a5f" stroke="#359a5f" stroke-width="0.7"/>
<polygon points="433.7,552.3 442.2,555.8 458.4,531.9 449.6,528.7" fill="#468d2b" stroke="#468d2b" stroke-width="0.7"/>
<polygon points="484.0,301.5 493.3,301.5 484.5,277.2 475.3,277.6" fill="#35936a" stroke="#35936a" stroke-width="0.7"/>
<polygon points="416.7,569.8 425.0,573.5 442.2,555.8 433.7,552.3" fill="#478127" stroke="#478127" stroke-width="0.7"/>
<polygon points="475.3,277.6 484.5,277.2 472.7,259.0 463.7,259.7" fill="#358476" stroke="#358476" stroke-width="0.7"/>
<polygon points="399.2,580.6 407.3,584.4 425.0,573.5 416.7,569.8" fill="#467424" stroke="#467424" stroke-width="0.7"/>
<polygon points="463.7,259.7 472.7,259.0 458.4,247.7 449.6,248.5" fill="#357683" stroke="#357683" stroke-width="0.7"/>
<polygon points="382.2,584.0 390.0,587.9 407.3,584.4 399.2,580.6" fill="#456722" stroke="#456722" stroke-width="0.7"/>
<polygon points="449.6,248.5 458.4,247.7 442.2,243.7 433.7,244.5" fill="#356d89" stroke="#356d89" stroke-width="0.7"/>
<polygon points="366.3,580.1 373.9,583.9 390.0,587.9 382.2,584.0" fill="#435920" stroke="#435920" stroke-width="0.7"/>
<polygon points="433.7,244.5 442.2,243.7 425.0,247.2 416.7,248.0" fill="#5096d8" stroke="#5096d8" stroke-width="0.7"/>
<polygon points="352.2,568.9 359.6,572.6 373.9,583.9 366.3,580.1" fill="#35371b" stroke="#35371b" stroke-width="0.7"/>
<polygon points="416.7,248.0 425.0,247.2 407.3,258.1 399.2,258.7" fill="#518be5" stroke="#518be5" stroke-width="0.7"/>
<polygon points="351.7,560.5 359.6,572.6 352.2,568.9 343.5,555.5" fill="#35241e" stroke="#35241e" stroke-width="0.7"/>
<polygon points="399.2,258.7 407.3,258.1 390.0,275.8 382.2,276.3" fill="#526ef2" stroke="#526ef2" stroke-width="0.7"/>
<polygon points="382.2,276.3 390.0,275.8 373.9,299.7 366.3,299.8" fill="#5151f2" stroke="#5151f2" stroke-width="0.7"/>
<polygon points="366.3,299.8 373.9,299.7 359.6,328.7 352.2,328.4" fill="#4f40e6" stroke="#4f40e6" stroke-width="0.7"/>
<polygon points="352.2,328.4 359.6,328.7 351.7,350.6 343.5,352.4" fill="#4d37d1" stroke="#4d37d1" stroke-width="0.7"/>
<polygon points="493.3,435.0 501.1,436.4 506.5,400.6 498.8,399.0" fill="#49c454" stroke="#49c454" stroke-width="0.7"/>
<polygon points="484.5,470.1 492.3,471.4 501.1,436.4 493.3,435.0" fill="#4eca4f" stroke="#4eca4f" stroke-width="0.7"/>
<polygon points="498.8,399.0 506.5,400.6 508.4,365.5 500.6,363.7" fill="#44bb57" stroke="#44bb57" stroke-width="0.7"/>
<polygon points="472.7,502.9 480.6,504.0 492.3,471.4 484.5,470.1" fill="#52be45" stroke="#52be45" stroke-width="0.7"/>
<polygon points="500.6,363.7 508.4,365.5 506.5,332.7 498.8,330.7" fill="#3fab5a" stroke="#3fab5a" stroke-width="0.7"/>
<polygon points="458.4,531.9 466.3,532.8 480.6,504.0 472.7,502.9" fill="#55ad39" stroke="#55ad39" stroke-width="0.7"/>
<polygon points="498.8,330.7 506.5,332.7 501.1,303.6 493.3,301.5" fill="#3b9a5f" stroke="#3b9a5f" stroke-width="0.7"/>
<polygon points="442.2,555.8 450.3,556.6 466.3,532.8 458.4,531.9" fill="#569d30" stroke="#569d30" stroke-width="0.7"/>
<polygon points="493.3,301.5 501.1,303.6 492.3,279.5 484.5,277.2" fill="#3b936a" stroke="#3b936a" stroke-width="0.7"/>
<polygon points="425.0,573.5 433.1,574.2 450.3,556.6 442.2,555.8" fill="#57902c" stroke="#57902c" stroke-width="0.7"/>
<polygon points="484.5,277.2 492.3,279.5 480.6,261.4 472.7,259.0" fill="#3b8476" stroke="#3b8476" stroke-width="0.7"/>
<polygon points="407.3,584.4 415.5,585.1 433.1,574.2 425.0,573.5" fill="#578128" stroke="#578128" stroke-width="0.7"/>
<polygon points="472.7,259.0 480.6,261.4 466.3,250.1 458.4,247.7" fill="#3b7683" stroke="#3b7683" stroke-width="0.7"/>
<polygon points="390.0,587.9 398.4,588.6 415.5,585.1 407.3,584.4" fill="#557326" stroke="#557326" stroke-width="0.7"/>
<polygon points="458.4,247.7 466.3,250.1 450.3,246.1 442.2,243.7" fill="#4e91b7" stroke="#4e91b7" stroke-width="0.7"/>
<polygon points="373.9,583.9 382.3,584.6 398.4,588.6 390.0,587.9" fill="#3b471a" stroke="#3b471a" stroke-width="0.7"/>
<polygon points="442.2,243.7 450.3,246.1 433.1,249.6 425.0,247.2" fill="#5189c5" stroke="#5189c5" stroke-width="0.7"/>
<polygon points="359.6,572.6 368.1,573.3 382.3,584.6 373.9,583.9" fill="#3b371b" stroke="#3b371b" stroke-width="0.7"/>
<polygon points="425.0,247.2 433.1,249.6 415.5,260.4 407.3,258.1" fill="#527fd1" stroke="#527fd1" stroke-width="0.7"/>
<polygon points="359.9,560.7 368.1,573.3 359.6,572.6 351.7,560.5" fill="#3b241e" stroke="#3b241e" stroke-width="0.7"/>
<polygon points="407.3,258.1 415.5,260.4 398.4,278.1 390.0,275.8" fill="#5365dd" stroke="#5365dd" stroke-width="0.7"/>
<polygon points="390.0,275.8 398.4,278.1 382.3,301.9 373.9,299.7" fill="#524add" stroke="#524add" stroke-width="0.7"/>
<polygon points="373.9,299.7 382.3,301.9 368.1,330.7 359.6,328.7" fill="#503ad2" stroke="#503ad2" stroke-width="0.7"/>
<polygon points="359.6,328.7 368.1,330.7 359.9,353.4 351.7,350.6" fill="#4d32be" stroke="#4d32be" stroke-width="0.7"/>
<polygon points="501.1,436.4 507.5,437.5 512.8,402.5 506.5,400.6" fill="#57d65b" stroke="#57d65b" stroke-width="0.7"/>
<polygon points="492.3,471.4 498.9,471.6 507.5,437.5 501.1,436.4" fill="#5cda55" stroke="#5cda55" stroke-width="0.7"/>
<polygon points="506.5,400.6 512.8,402.5 514.6,368.3 508.4,365.5" fill="#52ce60" stroke="#52ce60" stroke-width="0.7"/>
<polygon points="480.6,504.0 487.4,503.4 498.9,471.6 492.3,471.4" fill="#60cb4a" stroke="#60cb4a" stroke-width="0.7"/>
<polygon points="508.4,365.5 514.6,368.3 512.8,336.2 506.5,332.7" fill="#4dbf64" stroke="#4dbf64" stroke-width="0.7"/>
<polygon points="466.3,532.8 473.5,531.6 487.4,503.4 480.6,504.0" fill="#63b93d" stroke="#63b93d" stroke-width="0.7"/>
<polygon points="506.5,332.7 512.8,336.2 507.5,307.8 501.1,303.6" fill="#47aa69" stroke="#47aa69" stroke-width="0.7"/>
<polygon points="450.3,556.6 457.9,554.8 473.5,531.6 466.3,532.8" fill="#65a733" stroke="#65a733" stroke-width="0.7"/>
<polygon points="501.1,303.6 507.5,307.8 498.9,284.3 492.3,279.5" fill="#42966c" stroke="#42966c" stroke-width="0.7"/>
<polygon points="433.1,574.2 441.1,572.1 457.9,554.8 450.3,556.6" fill="#65992f" stroke="#65992f" stroke-width="0.7"/>
<polygon points="492.3,279.5 498.9,284.3 487.4,266.6 480.6,261.4" fill="#418476" stroke="#418476" stroke-width="0.7"/>
<polygon points="415.5,585.1 423.9,582.6 441.1,572.1 433.1,574.2" fill="#65892a" stroke="#65892a" stroke-width="0.7"/>
<polygon points="480.6,261.4 487.4,266.6 473.5,255.6 466.3,250.1" fill="#417683" stroke="#417683" stroke-width="0.7"/>
<polygon points="398.4,588.6 407.2,586.1 423.9,582.6 415.5,585.1" fill="#414f1a" stroke="#414f1a" stroke-width="0.7"/>
<polygon points="466.3,250.1 473.5,255.6 457.9,251.7 450.3,246.1" fill="#4c80a1" stroke="#4c80a1" stroke-width="0.7"/>
<polygon points="382.3,584.6 391.5,582.2 407.2,586.1 398.4,588.6" fill="#41471a" stroke="#41471a" stroke-width="0.7"/>
<polygon points="450.3,246.1 457.9,251.7 441.1,255.1 433.1,249.6" fill="#4e79ae" stroke="#4e79ae" stroke-width="0.7"/>
<polygon points="368.1,573.3 377.6,571.1 391.5,582.2 382.3,584.6" fill="#41371b" stroke="#41371b" stroke-width="0.7"/>
<polygon points="433.1,249.6 441.1,255.1 423.9,265.7 415.5,260.4" fill="#5070b9" stroke="#5070b9" stroke-width="0.7"/>
<polygon points="368.1,556.5 377.6,571.1 368.1,573.3 359.9,560.7" fill="#41241e" stroke="#41241e" stroke-width="0.7"/>
<polygon points="415.5,260.4 423.9,265.7 407.2,282.9 398.4,278.1" fill="#5059c4" stroke="#5059c4" stroke-width="0.7"/>
<polygon points="398.4,278.1 407.2,282.9 391.5,306.1 382.3,301.9" fill="#4f41c4" stroke="#4f41c4" stroke-width="0.7"/>
<polygon points="382.3,301.9 391.5,306.1 377.6,334.3 368.1,330.7" fill="#4d33b9" stroke="#4d33b9" stroke-width="0.7"/>
<polygon points="368.1,330.7 377.6,334.3 368.1,360.6 359.9,353.4" fill="#4a2ca7" stroke="#4a2ca7" stroke-width="0.7"/>
<polygon points="507.5,437.5 513.3,438.4 518.4,404.6 512.8,402.5" fill="#61da5d" stroke="#61da5d" stroke-width="0.7"/>
<polygon points="498.9,471.6 505.0,471.5 513.3,438.4 507.5,437.5" fill="#66de56" stroke="#66de56" stroke-width="0.7"/>
<polygon points="512.8,402.5 518.4,404.6 520.2,371.4 514.6,368.3" fill="#5cd362" stroke="#5cd362" stroke-width="0.7"/>
<polygon points="487.4,503.4 493.9,502.3 505.0,471.5 498.9,471.6" fill="#6ace4b" stroke="#6ace4b" stroke-width="0.7"/>
<polygon points="514.6,368.3 520.2,371.4 518.4,340.4 512.8,336.2" fill="#56c468" stroke="#56c468" stroke-width="0.7"/>
<polygon points="473.5,531.6 480.4,529.6 493.9,502.3 487.4,503.4" fill="#6dbb3d" stroke="#6dbb3d" stroke-width="0.7"/>
<polygon points="512.8,336.2 518.4,340.4 513.3,312.9 507.5,307.8" fill="#50b06d" stroke="#50b06d" stroke-width="0.7"/>
<polygon points="457.9,554.8 465.3,552.0 480.4,529.6 473.5,531.6" fill="#6fa933" stroke="#6fa933" stroke-width="0.7"/>
<polygon points="507.5,307.8 513.3,312.9 505.0,290.0 498.9,284.3" fill="#4b9d71" stroke="#4b9d71" stroke-width="0.7"/>
<polygon points="441.1,572.1 449.0,568.8 465.3,552.0 457.9,554.8" fill="#6f9b2f" stroke="#6f9b2f" stroke-width="0.7"/>
<polygon points="498.9,284.3 505.0,290.0 493.9,272.9 487.4,266.6" fill="#468476" stroke="#468476" stroke-width="0.7"/>
<polygon points="423.9,582.6 432.4,579.0 449.0,568.8 441.1,572.1" fill="#6f8b2b" stroke="#6f8b2b" stroke-width="0.7"/>
<polygon points="487.4,266.6 493.9,272.9 480.4,262.2 473.5,255.6" fill="#4b7e8c" stroke="#4b7e8c" stroke-width="0.7"/>
<polygon points="407.2,586.1 416.1,582.3 432.4,579.0 423.9,582.6" fill="#464f1a" stroke="#464f1a" stroke-width="0.7"/>
<polygon points="473.5,255.6 480.4,262.2 465.3,258.5 457.9,251.7" fill="#4e7a9a" stroke="#4e7a9a" stroke-width="0.7"/>
<polygon points="391.5,582.2 401.0,578.6 416.1,582.3 407.2,586.1" fill="#46471a" stroke="#46471a" stroke-width="0.7"/>
<polygon points="457.9,251.7 465.3,258.5 449.0,261.8 441.1,255.1" fill="#5173a6" stroke="#5173a6" stroke-width="0.7"/>
<polygon points="377.6,571.1 387.5,567.9 401.0,578.6 391.5,582.2" fill="#46371b" stroke="#46371b" stroke-width="0.7"/>
<polygon points="441.1,255.1 449.0,261.8 432.4,272.0 423.9,265.7" fill="#526bb0" stroke="#526bb0" stroke-width="0.7"/>
<polygon points="375.9,550.9 376.4,550.8 387.5,567.9 377.6,571.1 368.1,556.5" fill="#46241e" stroke="#46241e" stroke-width="0.7"/>
<polygon points="376.3,550.5 376.4,550.8 375.9,550.9" fill="#461720" stroke="#461720" stroke-width="0.7"/>
<polygon points="423.9,265.7 432.4,272.0 416.1,288.7 407.2,282.9" fill="#5355ba" stroke="#5355ba" stroke-width="0.7"/>
<polygon points="407.2,282.9 416.1,288.7 401.0,311.2 391.5,306.1" fill="#523eba" stroke="#523eba" stroke-width="0.7"/>
<polygon points="391.5,306.1 401.0,311.2 387.5,338.5 377.6,334.3" fill="#5031b1" stroke="#5031b1" stroke-width="0.7"/>
<polygon points="377.6,334.3 387.5,338.5 376.4,369.3 375.9,369.1 368.1,360.6" fill="#4d2a9f" stroke="#4d2a9f" stroke-width="0.7"/>
<polygon points="375.9,369.1 376.4,369.3 376.3,369.7" fill="#49248d" stroke="#49248d" stroke-width="0.7"/>
<polygon points="513.3,438.4 519.8,439.5 524.8,406.5 518.4,404.6" fill="#66d55b" stroke="#66d55b" stroke-width="0.7"/>
<polygon points="505.0,471.5 511.7,471.8 519.8,439.5 513.3,438.4" fill="#6bd955" stroke="#6bd955" stroke-width="0.7"/>
<polygon points="518.4,404.6 524.8,406.5 526.5,374.1 520.2,371.4" fill="#60cd5f" stroke="#60cd5f" stroke-width="0.7"/>
<polygon points="493.9,502.3 500.8,501.9 511.7,471.8 505.0,471.5" fill="#70cb49" stroke="#70cb49" stroke-width="0.7"/>
<polygon points="520.2,371.4 526.5,374.1 524.8,343.8 518.4,340.4" fill="#5abd64" stroke="#5abd64" stroke-width="0.7"/>
<polygon points="480.4,529.6 487.7,528.5 500.8,501.9 493.9,502.3" fill="#73b83c" stroke="#73b83c" stroke-width="0.7"/>
<polygon points="518.4,340.4 524.8,343.8 519.8,316.9 513.3,312.9" fill="#53a968" stroke="#53a968" stroke-width="0.7"/>
<polygon points="465.3,552.0 472.9,550.5 487.7,528.5 480.4,529.6" fill="#76a733" stroke="#76a733" stroke-width="0.7"/>
<polygon points="513.3,312.9 519.8,316.9 511.7,294.6 505.0,290.0" fill="#4d956b" stroke="#4d956b" stroke-width="0.7"/>
<polygon points="449.0,568.8 457.0,566.8 472.9,550.5 465.3,552.0" fill="#77992f" stroke="#77992f" stroke-width="0.7"/>
<polygon points="505.0,290.0 511.7,294.6 500.8,277.9 493.9,272.9" fill="#4c8476" stroke="#4c8476" stroke-width="0.7"/>
<polygon points="432.4,579.0 440.8,576.8 457.0,566.8 449.0,568.8" fill="#76892a" stroke="#76892a" stroke-width="0.7"/>
<polygon points="493.9,272.9 500.8,277.9 487.7,267.5 480.4,262.2" fill="#4c7683" stroke="#4c7683" stroke-width="0.7"/>
<polygon points="416.1,582.3 424.9,580.0 440.8,576.8 432.4,579.0" fill="#4c4f1a" stroke="#4c4f1a" stroke-width="0.7"/>
<polygon points="480.4,262.2 487.7,267.5 472.9,263.8 465.3,258.5" fill="#5a81a3" stroke="#5a81a3" stroke-width="0.7"/>
<polygon points="401.0,578.6 410.1,576.4 424.9,580.0 416.1,582.3" fill="#4c471a" stroke="#4c471a" stroke-width="0.7"/>
<polygon points="465.3,258.5 472.9,263.8 457.0,267.0 449.0,261.8" fill="#5d7ab0" stroke="#5d7ab0" stroke-width="0.7"/>
<polygon points="387.5,567.9 397.0,565.9 410.1,576.4 401.0,578.6" fill="#4c371b" stroke="#4c371b" stroke-width="0.7"/>
<polygon points="449.0,261.8 457.0,267.0 440.8,277.0 432.4,272.0" fill="#5e71bb" stroke="#5e71bb" stroke-width="0.7"/>
<polygon points="376.4,550.8 386.1,549.2 397.0,565.9 387.5,567.9" fill="#4c241e" stroke="#4c241e" stroke-width="0.7"/>
<polygon points="384.5,544.7 386.1,549.2 376.4,550.8 376.3,550.5" fill="#4c1720" stroke="#4c1720" stroke-width="0.7"/>
<polygon points="432.4,272.0 440.8,277.0 424.9,293.4 416.1,288.7" fill="#5f5ac5" stroke="#5f5ac5" stroke-width="0.7"/>
<polygon points="416.1,288.7 424.9,293.4 410.1,315.3 401.0,311.2" fill="#5e42c5" stroke="#5e42c5" stroke-width="0.7"/>
<polygon points="401.0,311.2 410.1,315.3 397.0,341.9 387.5,338.5" fill="#5c34bb" stroke="#5c34bb" stroke-width="0.7"/>
<polygon points="387.5,338.5 397.0,341.9 386.1,372.0 376.4,369.3" fill="#582da9" stroke="#582da9" stroke-width="0.7"/>
<polygon points="376.4,369.3 386.1,372.0 384.5,378.5 376.3,369.7" fill="#542696" stroke="#542696" stroke-width="0.7"/>
<polygon points="519.8,439.5 527.8,441.0 532.8,408.0 524.8,406.5" fill="#63c152" stroke="#63c152" stroke-width="0.7"/>
<polygon points="511.7,471.8 519.7,473.2 527.8,441.0 519.8,439.5" fill="#6ac74d" stroke="#6ac74d" stroke-width="0.7"/>
<polygon points="524.8,406.5 532.8,408.0 534.5,375.7 526.5,374.1" fill="#5cb755" stroke="#5cb755" stroke-width="0.7"/>
<polygon points="500.8,501.9 508.9,503.3 519.7,473.2 511.7,471.8" fill="#6fbb44" stroke="#6fbb44" stroke-width="0.7"/>
<polygon points="526.5,374.1 534.5,375.7 532.8,345.5 524.8,343.8" fill="#55a758" stroke="#55a758" stroke-width="0.7"/>
<polygon points="487.7,528.5 495.8,529.8 508.9,503.3 500.8,501.9" fill="#73ab38" stroke="#73ab38" stroke-width="0.7"/>
<polygon points="524.8,343.8 532.8,345.5 527.8,318.7 519.8,316.9" fill="#519a5f" stroke="#519a5f" stroke-width="0.7"/>
<polygon points="472.9,550.5 481.0,551.7 495.8,529.8 487.7,528.5" fill="#759b2f" stroke="#759b2f" stroke-width="0.7"/>
<polygon points="519.8,316.9 527.8,318.7 519.7,296.4 511.7,294.6" fill="#51936a" stroke="#51936a" stroke-width="0.7"/>
<polygon points="457.0,566.8 465.2,568.0 481.0,551.7 472.9,550.5" fill="#778e2b" stroke="#778e2b" stroke-width="0.7"/>
<polygon points="511.7,294.6 519.7,296.4 508.9,279.8 500.8,277.9" fill="#518476" stroke="#518476" stroke-width="0.7"/>
<polygon points="440.8,576.8 449.0,578.0 465.2,568.0 457.0,566.8" fill="#767f27" stroke="#767f27" stroke-width="0.7"/>
<polygon points="500.8,277.9 508.9,279.8 495.8,269.4 487.7,267.5" fill="#517683" stroke="#517683" stroke-width="0.7"/>
<polygon points="424.9,580.0 433.2,581.2 449.0,578.0 440.8,576.8" fill="#747125" stroke="#747125" stroke-width="0.7"/>
<polygon points="487.7,267.5 495.8,269.4 481.0,265.7 472.9,263.8" fill="#516d89" stroke="#516d89" stroke-width="0.7"/>
<polygon points="410.1,576.4 418.4,577.5 433.2,581.2 424.9,580.0" fill="#51471a" stroke="#51471a" stroke-width="0.7"/>
<polygon points="472.9,263.8 481.0,265.7 465.2,268.9 457.0,267.0" fill="#728cc9" stroke="#728cc9" stroke-width="0.7"/>
<polygon points="397.0,565.9 405.3,567.1 418.4,577.5 410.1,576.4" fill="#51371b" stroke="#51371b" stroke-width="0.7"/>
<polygon points="457.0,267.0 465.2,268.9 449.0,278.9 440.8,277.0" fill="#7481d5" stroke="#7481d5" stroke-width="0.7"/>
<polygon points="386.1,549.2 394.4,550.5 405.3,567.1 397.0,565.9" fill="#51241e" stroke="#51241e" stroke-width="0.7"/>
<polygon points="392.7,545.6 394.4,550.5 386.1,549.2 384.5,544.7" fill="#511720" stroke="#511720" stroke-width="0.7"/>
<polygon points="440.8,277.0 449.0,278.9 433.2,295.2 424.9,293.4" fill="#7467e1" stroke="#7467e1" stroke-width="0.7"/>
<polygon points="424.9,293.4 433.2,295.2 418.4,317.1 410.1,315.3" fill="#734be1" stroke="#734be1" stroke-width="0.7"/>
<polygon points="410.1,315.3 418.4,317.1 405.3,343.6 397.0,341.9" fill="#703bd6" stroke="#703bd6" stroke-width="0.7"/>
<polygon points="397.0,341.9 405.3,343.6 394.4,373.7 386.1,372.0" fill="#6c33c1" stroke="#6c33c1" stroke-width="0.7"/>
<polygon points="386.1,372.0 394.4,373.7 392.7,380.7 384.5,378.5" fill="#672bac" stroke="#672bac" stroke-width="0.7"/>
<polygon points="527.8,441.0 537.6,442.9 542.8,409.2 532.8,408.0" fill="#5aa446" stroke="#5aa446" stroke-width="0.7"/>
<polygon points="519.7,473.2 529.4,475.9 537.6,442.9 527.8,441.0" fill="#60aa42" stroke="#60aa42" stroke-width="0.7"/>
<polygon points="532.8,408.0 542.8,409.2 544.5,376.1 534.5,375.7" fill="#57a14b" stroke="#57a14b" stroke-width="0.7"/>
<polygon points="508.9,503.3 518.3,506.7 529.4,475.9 519.7,473.2" fill="#66a03a" stroke="#66a03a" stroke-width="0.7"/>
<polygon points="534.5,375.7 544.5,376.1 542.8,345.2 532.8,345.5" fill="#57a054" stroke="#57a054" stroke-width="0.7"/>
<polygon points="495.8,529.8 504.9,533.8 518.3,506.7 508.9,503.3" fill="#6a9330" stroke="#6a9330" stroke-width="0.7"/>
<polygon points="532.8,345.5 542.8,345.2 537.6,317.8 527.8,318.7" fill="#579a5f" stroke="#579a5f" stroke-width="0.7"/>
<polygon points="481.0,551.7 489.7,556.3 504.9,533.8 495.8,529.8" fill="#6c8529" stroke="#6c8529" stroke-width="0.7"/>
<polygon points="527.8,318.7 537.6,317.8 529.4,295.0 519.7,296.4" fill="#57936a" stroke="#57936a" stroke-width="0.7"/>
<polygon points="465.2,568.0 473.5,572.9 489.7,556.3 481.0,551.7" fill="#6d7a25" stroke="#6d7a25" stroke-width="0.7"/>
<polygon points="519.7,296.4 529.4,295.0 518.3,277.9 508.9,279.8" fill="#578476" stroke="#578476" stroke-width="0.7"/>
<polygon points="449.0,578.0 457.0,583.1 473.5,572.9 465.2,568.0" fill="#6d6e22" stroke="#6d6e22" stroke-width="0.7"/>
<polygon points="508.9,279.8 518.3,277.9 504.9,267.3 495.8,269.4" fill="#577683" stroke="#577683" stroke-width="0.7"/>
<polygon points="433.2,581.2 440.8,586.4 457.0,583.1 449.0,578.0" fill="#6b6120" stroke="#6b6120" stroke-width="0.7"/>
<polygon points="495.8,269.4 504.9,267.3 489.7,263.5 481.0,265.7" fill="#576d89" stroke="#576d89" stroke-width="0.7"/>
<polygon points="418.4,577.5 425.6,582.7 440.8,586.4 433.2,581.2" fill="#68541e" stroke="#68541e" stroke-width="0.7"/>
<polygon points="481.0,265.7 489.7,263.5 473.5,266.8 465.2,268.9" fill="#576490" stroke="#576490" stroke-width="0.7"/>
<polygon points="405.3,567.1 412.2,572.0 425.6,582.7 418.4,577.5" fill="#57371b" stroke="#57371b" stroke-width="0.7"/>
<polygon points="465.2,268.9 473.5,266.8 457.0,277.0 449.0,278.9" fill="#888eea" stroke="#888eea" stroke-width="0.7"/>
<polygon points="394.4,550.5 401.2,555.0 412.2,572.0 405.3,567.1" fill="#57241e" stroke="#57241e" stroke-width="0.7"/>
<polygon points="400.9,554.2 401.2,555.0 394.4,550.5 392.7,545.6" fill="#581721" stroke="#581721" stroke-width="0.7"/>
<polygon points="449.0,278.9 457.0,277.0 440.8,293.7 433.2,295.2" fill="#8871f7" stroke="#8871f7" stroke-width="0.7"/>
<polygon points="433.2,295.2 440.8,293.7 425.6,316.1 418.4,317.1" fill="#8752f7" stroke="#8752f7" stroke-width="0.7"/>
<polygon points="418.4,317.1 425.6,316.1 412.2,343.3 405.3,343.6" fill="#8441ec" stroke="#8441ec" stroke-width="0.7"/>
<polygon points="405.3,343.6 412.2,343.3 401.2,374.0 394.4,373.7" fill="#8039d6" stroke="#8039d6" stroke-width="0.7"/>
<polygon points="394.4,373.7 401.2,374.0 400.9,375.2 392.7,380.7" fill="#7b30c0" stroke="#7b30c0" stroke-width="0.7"/>
<polygon points="549.1,376.0 548.8,362.6 547.9,349.6 546.3,337.3 544.2,325.5 541.6,314.6 538.3,304.5 534.5,295.3 530.3,287.2 525.5,280.0 520.4,274.0 514.8,269.1 508.9,265.5 502.6,263.0 496.2,261.8 489.5,261.8 482.6,263.1 475.6,265.6 468.6,269.3 461.6,274.3 454.7,280.3 447.8,287.5 441.1,295.7 434.6,304.9 428.4,315.1 422.5,326.1 416.9,337.8 411.7,350.2 407.0,363.2 404.2,371.9 404.2,558.8 407.0,564.1 411.7,571.2 416.9,577.2 422.5,582.1 428.4,585.7 434.6,588.2 441.1,589.4 447.8,589.4 454.7,588.1 461.6,585.6 468.6,581.9 475.6,577.0 482.6,570.9 489.5,563.7 496.2,555.5 502.6,546.3 508.9,536.1 514.8,525.2 520.4,513.4 525.5,501.0 530.3,488.1 534.5,474.6 538.3,460.8 541.6,446.7 544.2,432.4 546.3,418.1 547.9,403.9 548.8,389.8" fill="#00dcaa" fill-opacity="0.38"/>
<path d="M406.5 414.0L468.6 425.6" stroke="#e01414" stroke-width="1.4" fill="none" stroke-dasharray="5 4"/>
<path d="M406.5 414.0L459.2 381.5" stroke="#0b6a0b" stroke-width="1.4" fill="none" stroke-dasharray="5 4"/>
<path d="M406.5 373.7L406.5 562.8" stroke="#1212d8" stroke-width="1.4" fill="none" stroke-dasharray="5 4"/>
<ellipse cx="435.4" cy="419.4" rx="1.7" ry="2.3" fill="#c01818"/>
<ellipse cx="464.3" cy="424.8" rx="1.7" ry="2.3" fill="#c01818"/>
<circle cx="422.5" cy="404.2" r="2" fill="none" stroke="#0b6a0b" stroke-width="1.2"/>
<circle cx="438.4" cy="394.3" r="2" fill="none" stroke="#0b6a0b" stroke-width="1.2"/>
<circle cx="454.4" cy="384.5" r="2" fill="none" stroke="#0b6a0b" stroke-width="1.2"/>
<ellipse cx="406.5" cy="383.0" rx="3" ry="1.7" fill="#1212d8"/>
<ellipse cx="406.5" cy="445.0" rx="3" ry="1.7" fill="#1212d8"/>
<ellipse cx="406.5" cy="476.0" rx="3" ry="1.7" fill="#1212d8"/>
<ellipse cx="406.5" cy="507.0" rx="3" ry="1.7" fill="#1212d8"/>
<ellipse cx="406.5" cy="538.0" rx="3" ry="1.7" fill="#1212d8"/>
<polygon points="537.6,442.9 548.8,445.2 554.1,410.1 542.8,409.2" fill="#5d9e44" stroke="#5d9e44" stroke-width="0.7"/>
<polygon points="529.4,475.9 540.2,479.5 548.8,445.2 537.6,442.9" fill="#5d993c" stroke="#5d993c" stroke-width="0.7"/>
<polygon points="542.8,409.2 554.1,410.1 555.9,375.7 544.5,376.1" fill="#5da14b" stroke="#5da14b" stroke-width="0.7"/>
<polygon points="518.3,506.7 528.6,511.5 540.2,479.5 529.4,475.9" fill="#608f34" stroke="#608f34" stroke-width="0.7"/>
<polygon points="544.5,376.1 555.9,375.7 554.1,343.5 542.8,345.2" fill="#5da054" stroke="#5da054" stroke-width="0.7"/>
<polygon points="504.9,533.8 514.7,539.8 528.6,511.5 518.3,506.7" fill="#64832b" stroke="#64832b" stroke-width="0.7"/>
<polygon points="542.8,345.2 554.1,343.5 548.8,314.9 537.6,317.8" fill="#5d9a5f" stroke="#5d9a5f" stroke-width="0.7"/>
<polygon points="489.7,556.3 498.9,563.2 514.7,539.8 504.9,533.8" fill="#677724" stroke="#677724" stroke-width="0.7"/>
<polygon points="537.6,317.8 548.8,314.9 540.2,291.2 529.4,295.0" fill="#5d936a" stroke="#5d936a" stroke-width="0.7"/>
<polygon points="473.5,572.9 482.1,580.5 498.9,563.2 489.7,556.3" fill="#686d21" stroke="#686d21" stroke-width="0.7"/>
<polygon points="529.4,295.0 540.2,291.2 528.6,273.4 518.3,277.9" fill="#5d8476" stroke="#5d8476" stroke-width="0.7"/>
<polygon points="457.0,583.1 464.8,591.2 482.1,580.5 473.5,572.9" fill="#67621e" stroke="#67621e" stroke-width="0.7"/>
<polygon points="518.3,277.9 528.6,273.4 514.7,262.3 504.9,267.3" fill="#5d7683" stroke="#5d7683" stroke-width="0.7"/>
<polygon points="440.8,586.4 448.0,594.6 464.8,591.2 457.0,583.1" fill="#65571d" stroke="#65571d" stroke-width="0.7"/>
<polygon points="504.9,267.3 514.7,262.3 498.9,258.4 489.7,263.5" fill="#5d6d89" stroke="#5d6d89" stroke-width="0.7"/>
<polygon points="425.6,582.7 432.2,590.7 448.0,594.6 440.8,586.4" fill="#624b1b" stroke="#624b1b" stroke-width="0.7"/>
<polygon points="489.7,263.5 498.9,258.4 482.1,261.9 473.5,266.8" fill="#5d6490" stroke="#5d6490" stroke-width="0.7"/>
<polygon points="412.2,572.0 418.3,579.6 432.2,590.7 425.6,582.7" fill="#5e381c" stroke="#5e381c" stroke-width="0.7"/>
<polygon points="473.5,266.8 482.1,261.9 464.8,272.5 457.0,277.0" fill="#9491ef" stroke="#9491ef" stroke-width="0.7"/>
<polygon points="401.2,555.0 401.8,555.7 409.1,565.4 418.3,579.6 412.2,572.0" fill="#612520" stroke="#612520" stroke-width="0.7"/>
<polygon points="401.8,555.7 401.2,555.0 400.9,554.2" fill="#671a24" stroke="#671a24" stroke-width="0.7"/>
<polygon points="457.0,277.0 464.8,272.5 448.0,289.9 440.8,293.7" fill="#9473fc" stroke="#9473fc" stroke-width="0.7"/>
<polygon points="440.8,293.7 448.0,289.9 432.2,313.2 425.6,316.1" fill="#9354fd" stroke="#9354fd" stroke-width="0.7"/>
<polygon points="425.6,316.1 432.2,313.2 418.3,341.5 412.2,343.3" fill="#9143f2" stroke="#9143f2" stroke-width="0.7"/>
<polygon points="412.2,343.3 418.3,341.5 409.1,367.0 401.8,374.0 401.2,374.0" fill="#8d3bdd" stroke="#8d3bdd" stroke-width="0.7"/>
<polygon points="401.2,374.0 401.8,374.0 400.9,375.2" fill="#8832c7" stroke="#8832c7" stroke-width="0.7"/>
<polygon points="538.1,443.1 546.3,444.7 549.4,427.3 541.1,426.1" fill="#00c1ca" stroke="#00c1ca" stroke-width="0.7"/>
<polygon points="534.3,459.8 542.4,462.0 546.3,444.7 538.1,443.1" fill="#00c6ce" stroke="#00c6ce" stroke-width="0.7"/>
<polygon points="541.1,426.1 549.4,427.3 551.6,409.8 543.3,409.2" fill="#00bdc5" stroke="#00bdc5" stroke-width="0.7"/>
<polygon points="529.8,476.2 537.8,478.8 542.4,462.0 534.3,459.8" fill="#00cad3" stroke="#00cad3" stroke-width="0.7"/>
<polygon points="543.3,409.2 551.6,409.8 553.0,392.6 544.6,392.4" fill="#00b8c0" stroke="#00b8c0" stroke-width="0.7"/>
<polygon points="524.6,491.9 532.4,495.1 537.8,478.8 529.8,476.2" fill="#00cdd6" stroke="#00cdd6" stroke-width="0.7"/>
<polygon points="544.6,392.4 553.0,392.6 553.4,375.7 545.0,376.0" fill="#00b3bb" stroke="#00b3bb" stroke-width="0.7"/>
<polygon points="518.7,507.0 526.3,510.6 532.4,495.1 524.6,491.9" fill="#00d0da" stroke="#00d0da" stroke-width="0.7"/>
<polygon points="545.0,376.0 553.4,375.7 553.0,359.3 544.6,360.1" fill="#00aeb6" stroke="#00aeb6" stroke-width="0.7"/>
<polygon points="512.2,521.2 519.7,525.1 526.3,510.6 518.7,507.0" fill="#00d3dd" stroke="#00d3dd" stroke-width="0.7"/>
<polygon points="544.6,360.1 553.0,359.3 551.6,343.7 543.3,344.9" fill="#00a9b0" stroke="#00a9b0" stroke-width="0.7"/>
<polygon points="505.2,534.3 512.5,538.6 519.7,525.1 512.2,521.2" fill="#00d6df" stroke="#00d6df" stroke-width="0.7"/>
<polygon points="543.3,344.9 551.6,343.7 549.4,329.0 541.1,330.6" fill="#00a8b0" stroke="#00a8b0" stroke-width="0.7"/>
<polygon points="497.8,546.2 504.8,550.9 512.5,538.6 505.2,534.3" fill="#00d7e1" stroke="#00d7e1" stroke-width="0.7"/>
<polygon points="541.1,330.6 549.4,329.0 546.3,315.3 538.1,317.4" fill="#00a8b0" stroke="#00a8b0" stroke-width="0.7"/>
<polygon points="490.0,556.8 496.8,561.8 504.8,550.9 497.8,546.2" fill="#00d9e2" stroke="#00d9e2" stroke-width="0.7"/>
<polygon points="538.1,317.4 546.3,315.3 542.4,302.9 534.3,305.3" fill="#00a8b0" stroke="#00a8b0" stroke-width="0.7"/>
<polygon points="482.0,565.9 488.5,571.2 496.8,561.8 490.0,556.8" fill="#00d9e3" stroke="#00d9e3" stroke-width="0.7"/>
<polygon points="534.3,305.3 542.4,302.9 537.8,291.8 529.8,294.5" fill="#00a8b0" stroke="#00a8b0" stroke-width="0.7"/>
<polygon points="473.8,573.5 480.1,579.1 488.5,571.2 482.0,565.9" fill="#00dae3" stroke="#00dae3" stroke-width="0.7"/>
<polygon points="529.8,294.5 537.8,291.8 532.4,282.2 524.6,285.2" fill="#00a8b0" stroke="#00a8b0" stroke-width="0.7"/>
<polygon points="465.5,579.5 471.5,585.2 480.1,579.1 473.8,573.5" fill="#00d9e3" stroke="#00d9e3" stroke-width="0.7"/>
<polygon points="524.6,285.2 532.4,282.2 526.3,274.2 518.7,277.4" fill="#00a8b0" stroke="#00a8b0" stroke-width="0.7"/>
<polygon points="457.1,583.8 463.0,589.6 471.5,585.2 465.5,579.5" fill="#00d8e2" stroke="#00d8e2" stroke-width="0.7"/>
<polygon points="518.7,277.4 526.3,274.2 519.7,267.8 512.2,271.2" fill="#00a8b0" stroke="#00a8b0" stroke-width="0.7"/>
<polygon points="448.9,586.3 454.5,592.2 463.0,589.6 457.1,583.8" fill="#00d7e1" stroke="#00d7e1" stroke-width="0.7"/>
<polygon points="512.2,271.2 519.7,267.8 512.5,263.2 505.2,266.7" fill="#00a8b0" stroke="#00a8b0" stroke-width="0.7"/>
<polygon points="440.9,587.1 446.2,593.0 454.5,592.2 448.9,586.3" fill="#00d5df" stroke="#00d5df" stroke-width="0.7"/>
<polygon points="505.2,266.7 512.5,263.2 504.8,260.3 497.8,263.9" fill="#00a8b0" stroke="#00a8b0" stroke-width="0.7"/>
<polygon points="433.1,586.1 438.2,592.0 446.2,593.0 440.9,587.1" fill="#00d3dc" stroke="#00d3dc" stroke-width="0.7"/>
<polygon points="497.8,263.9 504.8,260.3 496.8,259.3 490.0,262.9" fill="#00d3dc" stroke="#00d3dc" stroke-width="0.7"/>
<polygon points="425.7,583.3 430.6,589.1 438.2,592.0 433.1,586.1" fill="#00a8b0" stroke="#00a8b0" stroke-width="0.7"/>
<polygon points="490.0,262.9 496.8,259.3 488.5,260.1 482.0,263.7" fill="#00d5df" stroke="#00d5df" stroke-width="0.7"/>
<polygon points="418.7,578.8 423.4,584.5 430.6,589.1 425.7,583.3" fill="#00a8b0" stroke="#00a8b0" stroke-width="0.7"/>
<polygon points="482.0,263.7 488.5,260.1 480.1,262.7 473.8,266.2" fill="#00d7e1" stroke="#00d7e1" stroke-width="0.7"/>
<polygon points="412.2,572.6 416.7,578.1 423.4,584.5 418.7,578.8" fill="#00a8b0" stroke="#00a8b0" stroke-width="0.7"/>
<polygon points="473.8,266.2 480.1,262.7 471.5,267.1 465.5,270.5" fill="#00d8e2" stroke="#00d8e2" stroke-width="0.7"/>
<polygon points="406.3,564.8 410.7,570.1 416.7,578.1 412.2,572.6" fill="#00a8b0" stroke="#00a8b0" stroke-width="0.7"/>
<polygon points="465.5,270.5 471.5,267.1 463.0,273.2 457.1,276.5" fill="#00d9e3" stroke="#00d9e3" stroke-width="0.7"/>
<polygon points="401.1,555.5 401.2,555.6 407.1,563.8 410.7,570.1 406.3,564.8" fill="#00a8b0" stroke="#00a8b0" stroke-width="0.7"/>
<polygon points="401.2,555.6 401.1,555.5 401.1,555.4" fill="#00a8b0" stroke="#00a8b0" stroke-width="0.7"/>
<polygon points="457.1,276.5 463.0,273.2 454.5,281.1 448.9,284.1" fill="#00dae3" stroke="#00dae3" stroke-width="0.7"/>
<polygon points="448.9,284.1 454.5,281.1 446.2,290.5 440.9,293.2" fill="#00d9e3" stroke="#00d9e3" stroke-width="0.7"/>
<polygon points="440.9,293.2 446.2,290.5 438.2,301.4 433.1,303.8" fill="#00d9e2" stroke="#00d9e2" stroke-width="0.7"/>
<polygon points="433.1,303.8 438.2,301.4 430.6,313.7 425.7,315.7" fill="#00d7e1" stroke="#00d7e1" stroke-width="0.7"/>
<polygon points="425.7,315.7 430.6,313.7 423.4,327.2 418.7,328.9" fill="#00d6df" stroke="#00d6df" stroke-width="0.7"/>
<polygon points="418.7,328.9 423.4,327.2 416.7,341.7 412.2,343.0" fill="#00d3dd" stroke="#00d3dd" stroke-width="0.7"/>
<polygon points="412.2,343.0 416.7,341.7 410.7,357.2 406.3,358.1" fill="#00d0da" stroke="#00d0da" stroke-width="0.7"/>
<polygon points="401.1,373.9 401.2,373.9 401.1,374.1" fill="#00cad3" stroke="#00cad3" stroke-width="0.7"/>
<polygon points="406.3,358.1 410.7,357.2 407.1,367.9 401.2,373.9 401.1,373.9" fill="#00cdd6" stroke="#00cdd6" stroke-width="0.7"/>
<path d="M481.0 564.6 L485.5 559.6 L490.0 554.2 L494.4 548.3 L498.7 542.0 L502.8 535.3 L506.8 528.1 L510.7 520.6 L514.4 512.8 L518.0 504.7 L521.3 496.3 L524.5 487.6 L527.4 478.7 L530.1 469.7 L532.6 460.4 L534.9 451.1 L536.9 441.6 L538.6 432.1 L540.1 422.6 L541.3 413.1 L542.3 403.6 L542.9 394.2 L543.3 384.9 L543.4 375.7 L543.3 366.7 L542.9 357.9 L542.2 349.4 L541.2 341.1 L539.9 333.1 L538.4 325.4 L536.6 318.1 L534.6 311.2 L532.3 304.7 L529.8 298.5 L527.1 292.9 L524.1 287.7 L520.9 282.9 L517.6 278.7 L514.0 275.0 L510.3 271.8 L506.4 269.2" fill="none" stroke="#2adfea" stroke-width="2.4" stroke-dasharray="3.4 3.4"/>
<polygon points="548.8,445.2 560.2,447.6 565.8,410.9 554.1,410.1" fill="#629e44" stroke="#629e44" stroke-width="0.7"/>
<polygon points="540.2,479.5 551.2,483.4 560.2,447.6 548.8,445.2" fill="#62993c" stroke="#62993c" stroke-width="0.7"/>
<polygon points="554.1,410.1 565.8,410.9 567.7,375.0 555.9,375.7" fill="#62a14b" stroke="#62a14b" stroke-width="0.7"/>
<polygon points="528.6,511.5 539.2,516.7 551.2,483.4 540.2,479.5" fill="#648c33" stroke="#648c33" stroke-width="0.7"/>
<polygon points="555.9,375.7 567.7,375.0 565.8,341.4 554.1,343.5" fill="#62a054" stroke="#62a054" stroke-width="0.7"/>
<polygon points="514.7,539.8 524.7,546.2 539.2,516.7 528.6,511.5" fill="#68802a" stroke="#68802a" stroke-width="0.7"/>
<polygon points="554.1,343.5 565.8,341.4 560.2,311.6 548.8,314.9" fill="#629a5f" stroke="#629a5f" stroke-width="0.7"/>
<polygon points="498.9,563.2 508.2,570.6 524.7,546.2 514.7,539.8" fill="#6a7423" stroke="#6a7423" stroke-width="0.7"/>
<polygon points="548.8,314.9 560.2,311.6 551.2,286.9 540.2,291.2" fill="#62936a" stroke="#62936a" stroke-width="0.7"/>
<polygon points="482.1,580.5 490.6,588.7 508.2,570.6 498.9,563.2" fill="#6b6b21" stroke="#6b6b21" stroke-width="0.7"/>
<polygon points="540.2,291.2 551.2,286.9 539.2,268.3 528.6,273.4" fill="#628476" stroke="#628476" stroke-width="0.7"/>
<polygon points="464.8,591.2 472.6,599.8 490.6,588.7 482.1,580.5" fill="#6b5f1d" stroke="#6b5f1d" stroke-width="0.7"/>
<polygon points="528.6,273.4 539.2,268.3 524.7,256.8 514.7,262.3" fill="#627683" stroke="#627683" stroke-width="0.7"/>
<polygon points="448.0,594.6 455.1,603.4 472.6,599.8 464.8,591.2" fill="#69551c" stroke="#69551c" stroke-width="0.7"/>
<polygon points="514.7,262.3 524.7,256.8 508.2,252.7 498.9,258.4" fill="#626d89" stroke="#626d89" stroke-width="0.7"/>
<polygon points="432.2,590.7 438.6,599.3 455.1,603.4 448.0,594.6" fill="#66491a" stroke="#66491a" stroke-width="0.7"/>
<polygon points="498.9,258.4 508.2,252.7 490.6,256.3 482.1,261.9" fill="#626490" stroke="#626490" stroke-width="0.7"/>
<polygon points="418.3,579.6 424.1,587.7 438.6,599.3 432.2,590.7" fill="#62371b" stroke="#62371b" stroke-width="0.7"/>
<polygon points="482.1,261.9 490.6,256.3 472.6,267.4 464.8,272.5" fill="#625b96" stroke="#625b96" stroke-width="0.7"/>
<polygon points="417.2,577.2 424.1,587.7 418.3,579.6 409.1,565.4" fill="#692620" stroke="#692620" stroke-width="0.7"/>
<polygon points="464.8,272.5 472.6,267.4 455.1,285.5 448.0,289.9" fill="#9d73fd" stroke="#9d73fd" stroke-width="0.7"/>
<polygon points="448.0,289.9 455.1,285.5 438.6,309.8 432.2,313.2" fill="#9c54fe" stroke="#9c54fe" stroke-width="0.7"/>
<polygon points="432.2,313.2 438.6,309.8 424.1,339.3 418.3,341.5" fill="#9a43f3" stroke="#9a43f3" stroke-width="0.7"/>
<polygon points="418.3,341.5 424.1,339.3 417.2,358.3 409.1,367.0" fill="#963bde" stroke="#963bde" stroke-width="0.7"/>
<polygon points="560.2,447.6 570.8,449.7 576.6,411.9 565.8,410.9" fill="#689e44" stroke="#689e44" stroke-width="0.7"/>
<polygon points="551.2,483.4 561.6,486.6 570.8,449.7 560.2,447.6" fill="#6c9f3e" stroke="#6c9f3e" stroke-width="0.7"/>
<polygon points="565.8,410.9 576.6,411.9 578.5,374.9 567.7,375.0" fill="#68a14b" stroke="#68a14b" stroke-width="0.7"/>
<polygon points="539.2,516.7 549.2,521.0 561.6,486.6 551.2,483.4" fill="#729636" stroke="#729636" stroke-width="0.7"/>
<polygon points="567.7,375.0 578.5,374.9 576.6,340.3 565.8,341.4" fill="#68a054" stroke="#68a054" stroke-width="0.7"/>
<polygon points="524.7,546.2 534.2,551.4 549.2,521.0 539.2,516.7" fill="#778a2d" stroke="#778a2d" stroke-width="0.7"/>
<polygon points="565.8,341.4 576.6,340.3 570.8,309.6 560.2,311.6" fill="#689a5f" stroke="#689a5f" stroke-width="0.7"/>
<polygon points="508.2,570.6 517.2,576.5 534.2,551.4 524.7,546.2" fill="#7a7e26" stroke="#7a7e26" stroke-width="0.7"/>
<polygon points="560.2,311.6 570.8,309.6 561.6,284.1 551.2,286.9" fill="#68936a" stroke="#68936a" stroke-width="0.7"/>
<polygon points="490.6,588.7 499.1,595.1 517.2,576.5 508.2,570.6" fill="#7b7423" stroke="#7b7423" stroke-width="0.7"/>
<polygon points="551.2,286.9 561.6,284.1 549.2,265.0 539.2,268.3" fill="#688476" stroke="#688476" stroke-width="0.7"/>
<polygon points="472.6,599.8 480.6,606.6 499.1,595.1 490.6,588.7" fill="#7a6720" stroke="#7a6720" stroke-width="0.7"/>
<polygon points="539.2,268.3 549.2,265.0 534.2,253.1 524.7,256.8" fill="#687683" stroke="#687683" stroke-width="0.7"/>
<polygon points="455.1,603.4 462.4,610.2 480.6,606.6 472.6,599.8" fill="#785b1e" stroke="#785b1e" stroke-width="0.7"/>
<polygon points="524.7,256.8 534.2,253.1 517.2,248.9 508.2,252.7" fill="#686d89" stroke="#686d89" stroke-width="0.7"/>
<polygon points="438.6,599.3 445.5,606.0 462.4,610.2 455.1,603.4" fill="#744f1c" stroke="#744f1c" stroke-width="0.7"/>
<polygon points="508.2,252.7 517.2,248.9 499.1,252.6 490.6,256.3" fill="#686490" stroke="#686490" stroke-width="0.7"/>
<polygon points="424.1,587.7 430.5,594.1 445.5,606.0 438.6,599.3" fill="#6e3b1d" stroke="#6e3b1d" stroke-width="0.7"/>
<polygon points="425.4,586.3 430.5,594.1 424.1,587.7 417.2,577.2" fill="#68241e" stroke="#68241e" stroke-width="0.7"/>
<polygon points="490.6,256.3 499.1,252.6 480.6,264.0 472.6,267.4" fill="#a590ed" stroke="#a590ed" stroke-width="0.7"/>
<polygon points="472.6,267.4 480.6,264.0 462.4,282.7 455.1,285.5" fill="#a572fb" stroke="#a572fb" stroke-width="0.7"/>
<polygon points="455.1,285.5 462.4,282.7 445.5,307.8 438.6,309.8" fill="#a454fb" stroke="#a454fb" stroke-width="0.7"/>
<polygon points="438.6,309.8 445.5,307.8 430.5,338.2 424.1,339.3" fill="#a142f0" stroke="#a142f0" stroke-width="0.7"/>
<polygon points="424.1,339.3 430.5,338.2 425.4,352.2 417.2,358.3" fill="#9c3adb" stroke="#9c3adb" stroke-width="0.7"/>
<polygon points="570.8,449.7 579.7,451.4 585.5,413.3 576.6,411.9" fill="#7cb34c" stroke="#7cb34c" stroke-width="0.7"/>
<polygon points="561.6,486.6 570.4,488.6 579.7,451.4 570.8,449.7" fill="#84b948" stroke="#84b948" stroke-width="0.7"/>
<polygon points="576.6,411.9 585.5,413.3 587.5,376.0 578.5,374.9" fill="#72a94f" stroke="#72a94f" stroke-width="0.7"/>
<polygon points="549.2,521.0 557.9,523.3 570.4,488.6 561.6,486.6" fill="#8db040" stroke="#8db040" stroke-width="0.7"/>
<polygon points="578.5,374.9 587.5,376.0 585.5,341.0 576.6,340.3" fill="#6da054" stroke="#6da054" stroke-width="0.7"/>
<polygon points="534.2,551.4 542.7,554.0 557.9,523.3 549.2,521.0" fill="#93a335" stroke="#93a335" stroke-width="0.7"/>
<polygon points="576.6,340.3 585.5,341.0 579.7,310.1 570.8,309.6" fill="#6d9a5f" stroke="#6d9a5f" stroke-width="0.7"/>
<polygon points="517.2,576.5 525.7,579.3 542.7,554.0 534.2,551.4" fill="#98952d" stroke="#98952d" stroke-width="0.7"/>
<polygon points="570.8,309.6 579.7,310.1 570.4,284.4 561.6,284.1" fill="#6d936a" stroke="#6d936a" stroke-width="0.7"/>
<polygon points="499.1,595.1 507.4,598.1 525.7,579.3 517.2,576.5" fill="#99882a" stroke="#99882a" stroke-width="0.7"/>
<polygon points="561.6,284.1 570.4,284.4 557.9,265.1 549.2,265.0" fill="#6d8476" stroke="#6d8476" stroke-width="0.7"/>
<polygon points="480.6,606.6 488.7,609.7 507.4,598.1 499.1,595.1" fill="#977925" stroke="#977925" stroke-width="0.7"/>
<polygon points="549.2,265.0 557.9,265.1 542.7,253.1 534.2,253.1" fill="#6d7683" stroke="#6d7683" stroke-width="0.7"/>
<polygon points="462.4,610.2 470.4,613.4 488.7,609.7 480.6,606.6" fill="#936a23" stroke="#936a23" stroke-width="0.7"/>
<polygon points="534.2,253.1 542.7,253.1 525.7,248.8 517.2,248.9" fill="#6d6d89" stroke="#6d6d89" stroke-width="0.7"/>
<polygon points="445.5,606.0 453.3,609.1 470.4,613.4 462.4,610.2" fill="#8e5b21" stroke="#8e5b21" stroke-width="0.7"/>
<polygon points="517.2,248.9 525.7,248.8 507.4,252.5 499.1,252.6" fill="#a294d4" stroke="#a294d4" stroke-width="0.7"/>
<polygon points="430.5,594.1 438.2,597.1 453.3,609.1 445.5,606.0" fill="#6d371b" stroke="#6d371b" stroke-width="0.7"/>
<polygon points="433.6,590.1 438.2,597.1 430.5,594.1 425.4,586.3" fill="#6d241e" stroke="#6d241e" stroke-width="0.7"/>
<polygon points="499.1,252.6 507.4,252.5 488.7,264.1 480.6,264.0" fill="#a488e1" stroke="#a488e1" stroke-width="0.7"/>
<polygon points="480.6,264.0 488.7,264.1 470.4,282.9 462.4,282.7" fill="#a56cee" stroke="#a56cee" stroke-width="0.7"/>
<polygon points="462.4,282.7 470.4,282.9 453.3,308.2 445.5,307.8" fill="#a34fee" stroke="#a34fee" stroke-width="0.7"/>
<polygon points="445.5,307.8 453.3,308.2 438.2,338.9 430.5,338.2" fill="#a03fe2" stroke="#a03fe2" stroke-width="0.7"/>
<polygon points="430.5,338.2 438.2,338.9 433.6,351.5 425.4,352.2" fill="#9b36cd" stroke="#9b36cd" stroke-width="0.7"/>
<polygon points="579.7,451.4 586.8,452.6 592.5,415.1 585.5,413.3" fill="#96cf58" stroke="#96cf58" stroke-width="0.7"/>
<polygon points="570.4,488.6 577.5,489.3 586.8,452.6 579.7,451.4" fill="#9fd453" stroke="#9fd453" stroke-width="0.7"/>
<polygon points="585.5,413.3 592.5,415.1 594.4,378.3 587.5,376.0" fill="#8dc65c" stroke="#8dc65c" stroke-width="0.7"/>
<polygon points="557.9,523.3 565.2,523.5 577.5,489.3 570.4,488.6" fill="#a9ca49" stroke="#a9ca49" stroke-width="0.7"/>
<polygon points="587.5,376.0 594.4,378.3 592.5,343.8 585.5,341.0" fill="#83b660" stroke="#83b660" stroke-width="0.7"/>
<polygon points="542.7,554.0 550.3,553.8 565.2,523.5 557.9,523.3" fill="#b2ba3d" stroke="#b2ba3d" stroke-width="0.7"/>
<polygon points="585.5,341.0 592.5,343.8 586.8,313.3 579.7,310.1" fill="#78a163" stroke="#78a163" stroke-width="0.7"/>
<polygon points="525.7,579.3 533.5,578.7 550.3,553.8 542.7,554.0" fill="#b8ac34" stroke="#b8ac34" stroke-width="0.7"/>
<polygon points="579.7,310.1 586.8,313.3 577.5,288.0 570.4,284.4" fill="#73936a" stroke="#73936a" stroke-width="0.7"/>
<polygon points="507.4,598.1 515.4,597.3 533.5,578.7 525.7,579.3" fill="#b89c30" stroke="#b89c30" stroke-width="0.7"/>
<polygon points="570.4,284.4 577.5,288.0 565.2,269.0 557.9,265.1" fill="#738476" stroke="#738476" stroke-width="0.7"/>
<polygon points="488.7,609.7 497.0,608.7 515.4,597.3 507.4,598.1" fill="#b4892a" stroke="#b4892a" stroke-width="0.7"/>
<polygon points="557.9,265.1 565.2,269.0 550.3,257.1 542.7,253.1" fill="#737683" stroke="#737683" stroke-width="0.7"/>
<polygon points="470.4,613.4 479.0,612.3 497.0,608.7 488.7,609.7" fill="#af7828" stroke="#af7828" stroke-width="0.7"/>
<polygon points="542.7,253.1 550.3,257.1 533.5,252.9 525.7,248.8" fill="#8f88ab" stroke="#8f88ab" stroke-width="0.7"/>
<polygon points="453.3,609.1 462.1,608.1 479.0,612.3 470.4,613.4" fill="#73471a" stroke="#73471a" stroke-width="0.7"/>
<polygon points="525.7,248.8 533.5,252.9 515.4,256.6 507.4,252.5" fill="#9480b9" stroke="#9480b9" stroke-width="0.7"/>
<polygon points="438.2,597.1 447.2,596.3 462.1,608.1 453.3,609.1" fill="#73371b" stroke="#73371b" stroke-width="0.7"/>
<polygon points="441.8,588.0 447.2,596.3 438.2,597.1 433.6,590.1" fill="#73241e" stroke="#73241e" stroke-width="0.7"/>
<polygon points="507.4,252.5 515.4,256.6 497.0,268.0 488.7,264.1" fill="#9777c4" stroke="#9777c4" stroke-width="0.7"/>
<polygon points="488.7,264.1 497.0,268.0 479.0,286.5 470.4,282.9" fill="#975fcf" stroke="#975fcf" stroke-width="0.7"/>
<polygon points="470.4,282.9 479.0,286.5 462.1,311.5 453.3,308.2" fill="#9645d0" stroke="#9645d0" stroke-width="0.7"/>
<polygon points="453.3,308.2 462.1,311.5 447.2,341.7 438.2,338.9" fill="#9236c5" stroke="#9236c5" stroke-width="0.7"/>
<polygon points="438.2,338.9 447.2,341.7 441.8,356.7 433.6,351.5" fill="#8d2fb2" stroke="#8d2fb2" stroke-width="0.7"/>
<polygon points="586.8,452.6 592.4,453.5 597.9,417.2 592.5,415.1" fill="#a8dc5e" stroke="#a8dc5e" stroke-width="0.7"/>
<polygon points="577.5,489.3 583.4,489.0 592.4,453.5 586.8,452.6" fill="#b0e057" stroke="#b0e057" stroke-width="0.7"/>
<polygon points="592.5,415.1 597.9,417.2 599.7,381.5 594.4,378.3" fill="#9fd563" stroke="#9fd563" stroke-width="0.7"/>
<polygon points="565.2,523.5 571.5,522.1 583.4,489.0 577.5,489.3" fill="#bbd44d" stroke="#bbd44d" stroke-width="0.7"/>
<polygon points="594.4,378.3 599.7,381.5 597.9,348.2 592.5,343.8" fill="#96c769" stroke="#96c769" stroke-width="0.7"/>
<polygon points="550.3,553.8 557.1,551.4 571.5,522.1 565.2,523.5" fill="#c5c541" stroke="#c5c541" stroke-width="0.7"/>
<polygon points="592.5,343.8 597.9,348.2 592.4,318.7 586.8,313.3" fill="#8cb36e" stroke="#8cb36e" stroke-width="0.7"/>
<polygon points="533.5,578.7 540.8,575.5 557.1,551.4 550.3,553.8" fill="#ccb637" stroke="#ccb637" stroke-width="0.7"/>
<polygon points="586.8,313.3 592.4,318.7 583.4,294.2 577.5,288.0" fill="#839f73" stroke="#839f73" stroke-width="0.7"/>
<polygon points="515.4,597.3 523.3,593.5 540.8,575.5 533.5,578.7" fill="#cba432" stroke="#cba432" stroke-width="0.7"/>
<polygon points="577.5,288.0 583.4,294.2 571.5,275.8 565.2,269.0" fill="#7b8678" stroke="#7b8678" stroke-width="0.7"/>
<polygon points="497.0,608.7 505.5,604.5 523.3,593.5 515.4,597.3" fill="#c6902c" stroke="#c6902c" stroke-width="0.7"/>
<polygon points="565.2,269.0 571.5,275.8 557.1,264.3 550.3,257.1" fill="#7e7b89" stroke="#7e7b89" stroke-width="0.7"/>
<polygon points="479.0,612.3 488.0,608.1 505.5,604.5 497.0,608.7" fill="#7a501b" stroke="#7a501b" stroke-width="0.7"/>
<polygon points="550.3,257.1 557.1,264.3 540.8,260.3 533.5,252.9" fill="#847796" stroke="#847796" stroke-width="0.7"/>
<polygon points="462.1,608.1 471.7,604.0 488.0,608.1 479.0,612.3" fill="#79471a" stroke="#79471a" stroke-width="0.7"/>
<polygon points="533.5,252.9 540.8,260.3 523.3,263.8 515.4,256.6" fill="#8871a2" stroke="#8871a2" stroke-width="0.7"/>
<polygon points="447.2,596.3 457.3,592.6 471.7,604.0 462.1,608.1" fill="#79371b" stroke="#79371b" stroke-width="0.7"/>
<polygon points="450.0,581.3 457.3,592.6 447.2,596.3 441.8,588.0" fill="#79241e" stroke="#79241e" stroke-width="0.7"/>
<polygon points="515.4,256.6 523.3,263.8 505.5,274.8 497.0,268.0" fill="#8b69ad" stroke="#8b69ad" stroke-width="0.7"/>
<polygon points="497.0,268.0 505.5,274.8 488.0,292.8 479.0,286.5" fill="#8c53b6" stroke="#8c53b6" stroke-width="0.7"/>
<polygon points="479.0,286.5 488.0,292.8 471.7,316.9 462.1,311.5" fill="#8a3db6" stroke="#8a3db6" stroke-width="0.7"/>
<polygon points="462.1,311.5 471.7,316.9 457.3,346.2 447.2,341.7" fill="#8730ad" stroke="#8730ad" stroke-width="0.7"/>
<polygon points="447.2,341.7 457.3,346.2 450.0,366.4 441.8,356.7" fill="#82299c" stroke="#82299c" stroke-width="0.7"/>
<polygon points="592.4,453.5 597.4,454.3 602.7,419.4 597.9,417.2" fill="#b2df5f" stroke="#b2df5f" stroke-width="0.7"/>
<polygon points="583.4,489.0 588.9,488.4 597.4,454.3 592.4,453.5" fill="#bbe258" stroke="#bbe258" stroke-width="0.7"/>
<polygon points="597.9,417.2 602.7,419.4 604.5,385.2 599.7,381.5" fill="#aad965" stroke="#aad965" stroke-width="0.7"/>
<polygon points="571.5,522.1 577.4,520.1 588.9,488.4 583.4,489.0" fill="#c7d84e" stroke="#c7d84e" stroke-width="0.7"/>
<polygon points="599.7,381.5 604.5,385.2 602.7,353.2 597.9,348.2" fill="#a0cb6b" stroke="#a0cb6b" stroke-width="0.7"/>
<polygon points="557.1,551.4 563.5,548.2 577.4,520.1 571.5,522.1" fill="#d2c942" stroke="#d2c942" stroke-width="0.7"/>
<polygon points="597.9,348.2 602.7,353.2 597.4,324.8 592.4,318.7" fill="#97b871" stroke="#97b871" stroke-width="0.7"/>
<polygon points="540.8,575.5 547.9,571.4 563.5,548.2 557.1,551.4" fill="#dbba38" stroke="#dbba38" stroke-width="0.7"/>
<polygon points="592.4,318.7 597.4,324.8 588.9,301.3 583.4,294.2" fill="#8ea577" stroke="#8ea577" stroke-width="0.7"/>
<polygon points="523.3,593.5 531.1,588.6 547.9,571.4 540.8,575.5" fill="#d9a733" stroke="#d9a733" stroke-width="0.7"/>
<polygon points="583.4,294.2 588.9,301.3 577.4,283.7 571.5,275.8" fill="#868c7d" stroke="#868c7d" stroke-width="0.7"/>
<polygon points="505.5,604.5 514.0,599.2 531.1,588.6 523.3,593.5" fill="#d3922d" stroke="#d3922d" stroke-width="0.7"/>
<polygon points="571.5,275.8 577.4,283.7 563.5,272.6 557.1,264.3" fill="#7e7683" stroke="#7e7683" stroke-width="0.7"/>
<polygon points="488.0,608.1 497.3,602.6 514.0,599.2 505.5,604.5" fill="#80501b" stroke="#80501b" stroke-width="0.7"/>
<polygon points="557.1,264.3 563.5,272.6 547.9,268.8 540.8,260.3" fill="#847290" stroke="#847290" stroke-width="0.7"/>
<polygon points="471.7,604.0 481.6,598.7 497.3,602.6 488.0,608.1" fill="#7e471a" stroke="#7e471a" stroke-width="0.7"/>
<polygon points="540.8,260.3 547.9,268.8 531.1,272.2 523.3,263.8" fill="#886c9b" stroke="#886c9b" stroke-width="0.7"/>
<polygon points="457.3,592.6 467.8,587.7 481.6,598.7 471.7,604.0" fill="#7e371b" stroke="#7e371b" stroke-width="0.7"/>
<polygon points="523.3,263.8 531.1,272.2 514.0,282.7 505.5,274.8" fill="#8b64a5" stroke="#8b64a5" stroke-width="0.7"/>
<polygon points="458.2,573.0 467.8,587.7 457.3,592.6 450.0,581.3" fill="#7e241e" stroke="#7e241e" stroke-width="0.7"/>
<polygon points="505.5,274.8 514.0,282.7 497.3,300.0 488.0,292.8" fill="#8c50ae" stroke="#8c50ae" stroke-width="0.7"/>
<polygon points="488.0,292.8 497.3,300.0 481.6,323.2 471.7,316.9" fill="#8a3aae" stroke="#8a3aae" stroke-width="0.7"/>
<polygon points="471.7,316.9 481.6,323.2 467.8,351.2 457.3,346.2" fill="#872ea5" stroke="#872ea5" stroke-width="0.7"/>
<polygon points="457.3,346.2 467.8,351.2 458.2,377.8 450.0,366.4" fill="#822895" stroke="#822895" stroke-width="0.7"/>
<polygon points="597.4,454.3 603.0,455.1 608.1,421.5 602.7,419.4" fill="#b8dc5e" stroke="#b8dc5e" stroke-width="0.7"/>
<polygon points="588.9,488.4 594.7,488.0 603.0,455.1 597.4,454.3" fill="#c1e057" stroke="#c1e057" stroke-width="0.7"/>
<polygon points="602.7,419.4 608.1,421.5 609.8,388.5 604.5,385.2" fill="#aed563" stroke="#aed563" stroke-width="0.7"/>
<polygon points="577.4,520.1 583.7,518.7 594.7,488.0 588.9,488.4" fill="#cfd84e" stroke="#cfd84e" stroke-width="0.7"/>
<polygon points="604.5,385.2 609.8,388.5 608.1,357.6 602.7,353.2" fill="#a4c769" stroke="#a4c769" stroke-width="0.7"/>
<polygon points="563.5,548.2 570.3,545.8 583.7,518.7 577.4,520.1" fill="#dcca42" stroke="#dcca42" stroke-width="0.7"/>
<polygon points="602.7,353.2 608.1,357.6 603.0,330.3 597.4,324.8" fill="#9ab36f" stroke="#9ab36f" stroke-width="0.7"/>
<polygon points="547.9,571.4 555.2,568.2 570.3,545.8 563.5,548.2" fill="#e8bc39" stroke="#e8bc39" stroke-width="0.7"/>
<polygon points="597.4,324.8 603.0,330.3 594.7,307.6 588.9,301.3" fill="#90a073" stroke="#90a073" stroke-width="0.7"/>
<polygon points="531.1,588.6 539.0,584.8 555.2,568.2 547.9,571.4" fill="#e5a934" stroke="#e5a934" stroke-width="0.7"/>
<polygon points="588.9,301.3 594.7,307.6 583.7,290.5 577.4,283.7" fill="#868779" stroke="#868779" stroke-width="0.7"/>
<polygon points="514.0,599.2 522.5,595.0 539.0,584.8 531.1,588.6" fill="#dd932d" stroke="#dd932d" stroke-width="0.7"/>
<polygon points="577.4,283.7 583.7,290.5 570.3,279.9 563.5,272.6" fill="#897b89" stroke="#897b89" stroke-width="0.7"/>
<polygon points="497.3,602.6 506.3,598.3 522.5,595.0 514.0,599.2" fill="#86511b" stroke="#86511b" stroke-width="0.7"/>
<polygon points="563.5,272.6 570.3,279.9 555.2,276.2 547.9,268.8" fill="#907796" stroke="#907796" stroke-width="0.7"/>
<polygon points="481.6,598.7 491.3,594.5 506.3,598.3 497.3,602.6" fill="#84471a" stroke="#84471a" stroke-width="0.7"/>
<polygon points="547.9,268.8 555.2,276.2 539.0,279.5 531.1,272.2" fill="#9571a2" stroke="#9571a2" stroke-width="0.7"/>
<polygon points="467.8,587.7 477.9,583.9 491.3,594.5 481.6,598.7" fill="#84371b" stroke="#84371b" stroke-width="0.7"/>
<polygon points="531.1,272.2 539.0,279.5 522.5,289.7 514.0,282.7" fill="#9768ac" stroke="#9768ac" stroke-width="0.7"/>
<polygon points="464.7,567.5 466.8,566.9 477.9,583.9 467.8,587.7 458.2,573.0" fill="#84241e" stroke="#84241e" stroke-width="0.7"/>
<polygon points="466.4,565.6 466.8,566.9 464.7,567.5" fill="#841720" stroke="#841720" stroke-width="0.7"/>
<polygon points="514.0,282.7 522.5,289.7 506.3,306.3 497.3,300.0" fill="#9853b6" stroke="#9853b6" stroke-width="0.7"/>
<polygon points="497.3,300.0 506.3,306.3 491.3,328.6 481.6,323.2" fill="#963cb6" stroke="#963cb6" stroke-width="0.7"/>
<polygon points="481.6,323.2 491.3,328.6 477.9,355.7 467.8,351.2" fill="#9330ac" stroke="#9330ac" stroke-width="0.7"/>
<polygon points="467.8,351.2 477.9,355.7 466.8,386.4 464.7,385.7 458.2,377.8" fill="#8d299c" stroke="#8d299c" stroke-width="0.7"/>
<polygon points="464.7,385.7 466.8,386.4 466.4,388.3" fill="#86238a" stroke="#86238a" stroke-width="0.7"/>
<polygon points="603.0,455.1 609.8,456.3 614.8,423.3 608.1,421.5" fill="#b6d159" stroke="#b6d159" stroke-width="0.7"/>
<polygon points="594.7,488.0 601.7,488.6 609.8,456.3 603.0,455.1" fill="#c1d753" stroke="#c1d753" stroke-width="0.7"/>
<polygon points="608.1,421.5 614.8,423.3 616.5,390.9 609.8,388.5" fill="#aac85d" stroke="#aac85d" stroke-width="0.7"/>
<polygon points="583.7,518.7 590.9,518.7 601.7,488.6 594.7,488.0" fill="#d2d14c" stroke="#d2d14c" stroke-width="0.7"/>
<polygon points="609.8,388.5 616.5,390.9 614.8,360.7 608.1,357.6" fill="#9eb961" stroke="#9eb961" stroke-width="0.7"/>
<polygon points="570.3,545.8 577.7,545.3 590.9,518.7 583.7,518.7" fill="#e1c641" stroke="#e1c641" stroke-width="0.7"/>
<polygon points="608.1,357.6 614.8,360.7 609.8,333.8 603.0,330.3" fill="#92a465" stroke="#92a465" stroke-width="0.7"/>
<polygon points="555.2,568.2 562.9,567.2 577.7,545.3 570.3,545.8" fill="#efba38" stroke="#efba38" stroke-width="0.7"/>
<polygon points="603.0,330.3 609.8,333.8 601.7,311.5 594.7,307.6" fill="#89936a" stroke="#89936a" stroke-width="0.7"/>
<polygon points="539.0,584.8 547.1,583.6 562.9,567.2 555.2,568.2" fill="#eba733" stroke="#eba733" stroke-width="0.7"/>
<polygon points="594.7,307.6 601.7,311.5 590.9,294.8 583.7,290.5" fill="#898476" stroke="#898476" stroke-width="0.7"/>
<polygon points="522.5,595.0 530.9,593.6 547.1,583.6 539.0,584.8" fill="#e1902c" stroke="#e1902c" stroke-width="0.7"/>
<polygon points="583.7,290.5 590.9,294.8 577.7,284.4 570.3,279.9" fill="#897683" stroke="#897683" stroke-width="0.7"/>
<polygon points="506.3,598.3 515.0,596.8 530.9,593.6 522.5,595.0" fill="#d57b29" stroke="#d57b29" stroke-width="0.7"/>
<polygon points="570.3,279.9 577.7,284.4 562.9,280.7 555.2,276.2" fill="#a885a8" stroke="#a885a8" stroke-width="0.7"/>
<polygon points="491.3,594.5 500.2,593.1 515.0,596.8 506.3,598.3" fill="#89471a" stroke="#89471a" stroke-width="0.7"/>
<polygon points="555.2,276.2 562.9,280.7 547.1,283.9 539.0,279.5" fill="#ae7eb6" stroke="#ae7eb6" stroke-width="0.7"/>
<polygon points="477.9,583.9 487.1,582.7 500.2,593.1 491.3,594.5" fill="#89371b" stroke="#89371b" stroke-width="0.7"/>
<polygon points="539.0,279.5 547.1,283.9 530.9,293.9 522.5,289.7" fill="#b175c1" stroke="#b175c1" stroke-width="0.7"/>
<polygon points="466.8,566.9 476.2,566.0 487.1,582.7 477.9,583.9" fill="#89241e" stroke="#89241e" stroke-width="0.7"/>
<polygon points="474.6,561.4 476.2,566.0 466.8,566.9 466.4,565.6" fill="#891720" stroke="#891720" stroke-width="0.7"/>
<polygon points="522.5,289.7 530.9,293.9 515.0,310.3 506.3,306.3" fill="#b25dcc" stroke="#b25dcc" stroke-width="0.7"/>
<polygon points="506.3,306.3 515.0,310.3 500.2,332.2 491.3,328.6" fill="#b044cc" stroke="#b044cc" stroke-width="0.7"/>
<polygon points="491.3,328.6 500.2,332.2 487.1,358.8 477.9,355.7" fill="#ac36c2" stroke="#ac36c2" stroke-width="0.7"/>
<polygon points="477.9,355.7 487.1,358.8 476.2,388.9 466.8,386.4" fill="#a52eaf" stroke="#a52eaf" stroke-width="0.7"/>
<polygon points="466.8,386.4 476.2,388.9 474.6,395.5 466.4,388.3" fill="#9d279b" stroke="#9d279b" stroke-width="0.7"/>
<polygon points="609.8,456.3 618.3,457.9 623.3,424.8 614.8,423.3" fill="#a8ba4f" stroke="#a8ba4f" stroke-width="0.7"/>
<polygon points="601.7,488.6 610.1,490.3 618.3,457.9 609.8,456.3" fill="#b4c14b" stroke="#b4c14b" stroke-width="0.7"/>
<polygon points="614.8,423.3 623.3,424.8 625.0,392.3 616.5,390.9" fill="#9cb052" stroke="#9cb052" stroke-width="0.7"/>
<polygon points="590.9,518.7 599.2,520.5 610.1,490.3 601.7,488.6" fill="#c7be45" stroke="#c7be45" stroke-width="0.7"/>
<polygon points="616.5,390.9 625.0,392.3 623.3,361.9 614.8,360.7" fill="#8fa054" stroke="#8fa054" stroke-width="0.7"/>
<polygon points="577.7,545.3 586.1,547.2 599.2,520.5 590.9,518.7" fill="#d8b63c" stroke="#d8b63c" stroke-width="0.7"/>
<polygon points="614.8,360.7 623.3,361.9 618.3,334.9 609.8,333.8" fill="#8f9a5f" stroke="#8f9a5f" stroke-width="0.7"/>
<polygon points="562.9,567.2 571.2,569.3 586.1,547.2 577.7,545.3" fill="#e7ad34" stroke="#e7ad34" stroke-width="0.7"/>
<polygon points="609.8,333.8 618.3,334.9 610.1,312.6 601.7,311.5" fill="#8f936a" stroke="#8f936a" stroke-width="0.7"/>
<polygon points="547.1,583.6 555.3,585.7 571.2,569.3 562.9,567.2" fill="#e39a2f" stroke="#e39a2f" stroke-width="0.7"/>
<polygon points="601.7,311.5 610.1,312.6 599.2,295.8 590.9,294.8" fill="#8f8476" stroke="#8f8476" stroke-width="0.7"/>
<polygon points="530.9,593.6 539.0,595.7 555.3,585.7 547.1,583.6" fill="#d88429" stroke="#d88429" stroke-width="0.7"/>
<polygon points="590.9,294.8 599.2,295.8 586.1,285.3 577.7,284.4" fill="#8f7683" stroke="#8f7683" stroke-width="0.7"/>
<polygon points="515.0,596.8 523.1,598.9 539.0,595.7 530.9,593.6" fill="#cb7025" stroke="#cb7025" stroke-width="0.7"/>
<polygon points="577.7,284.4 586.1,285.3 571.2,281.6 562.9,280.7" fill="#8f6d89" stroke="#8f6d89" stroke-width="0.7"/>
<polygon points="500.2,593.1 508.2,595.2 523.1,598.9 515.0,596.8" fill="#c05f22" stroke="#c05f22" stroke-width="0.7"/>
<polygon points="562.9,280.7 571.2,281.6 555.3,284.9 547.1,283.9" fill="#ce90cf" stroke="#ce90cf" stroke-width="0.7"/>
<polygon points="487.1,582.7 495.0,584.8 508.2,595.2 500.2,593.1" fill="#8f371b" stroke="#8f371b" stroke-width="0.7"/>
<polygon points="547.1,283.9 555.3,284.9 539.0,294.9 530.9,293.9" fill="#d185db" stroke="#d185db" stroke-width="0.7"/>
<polygon points="476.2,566.0 484.2,568.0 495.0,584.8 487.1,582.7" fill="#8f241e" stroke="#8f241e" stroke-width="0.7"/>
<polygon points="482.7,564.1 484.2,568.0 476.2,566.0 474.6,561.4" fill="#8f1720" stroke="#8f1720" stroke-width="0.7"/>
<polygon points="530.9,293.9 539.0,294.9 523.1,311.3 515.0,310.3" fill="#d26ae8" stroke="#d26ae8" stroke-width="0.7"/>
<polygon points="515.0,310.3 523.1,311.3 508.2,333.3 500.2,332.2" fill="#d04de8" stroke="#d04de8" stroke-width="0.7"/>
<polygon points="500.2,332.2 508.2,333.3 495.0,360.0 487.1,358.8" fill="#cc3ddc" stroke="#cc3ddc" stroke-width="0.7"/>
<polygon points="487.1,358.8 495.0,360.0 484.2,390.2 476.2,388.9" fill="#c435c7" stroke="#c435c7" stroke-width="0.7"/>
<polygon points="476.2,388.9 484.2,390.2 482.7,395.8 474.6,395.5" fill="#bb2db1" stroke="#bb2db1" stroke-width="0.7"/>
<polygon points="618.3,457.9 628.1,459.9 633.3,425.9 623.3,424.8" fill="#9aa446" stroke="#9aa446" stroke-width="0.7"/>
<polygon points="610.1,490.3 619.8,493.0 628.1,459.9 618.3,457.9" fill="#a5aa42" stroke="#a5aa42" stroke-width="0.7"/>
<polygon points="623.3,424.8 633.3,425.9 635.0,392.7 625.0,392.3" fill="#95a14b" stroke="#95a14b" stroke-width="0.7"/>
<polygon points="599.2,520.5 608.7,524.0 619.8,493.0 610.1,490.3" fill="#b7a83d" stroke="#b7a83d" stroke-width="0.7"/>
<polygon points="625.0,392.3 635.0,392.7 633.3,361.6 623.3,361.9" fill="#95a054" stroke="#95a054" stroke-width="0.7"/>
<polygon points="586.1,547.2 595.2,551.3 608.7,524.0 599.2,520.5" fill="#c7a235" stroke="#c7a235" stroke-width="0.7"/>
<polygon points="623.3,361.9 633.3,361.6 628.1,334.0 618.3,334.9" fill="#959a5f" stroke="#959a5f" stroke-width="0.7"/>
<polygon points="571.2,569.3 580.0,573.8 595.2,551.3 586.1,547.2" fill="#d5992f" stroke="#d5992f" stroke-width="0.7"/>
<polygon points="618.3,334.9 628.1,334.0 619.8,311.1 610.1,312.6" fill="#95936a" stroke="#95936a" stroke-width="0.7"/>
<polygon points="555.3,585.7 563.7,590.6 580.0,573.8 571.2,569.3" fill="#d1892a" stroke="#d1892a" stroke-width="0.7"/>
<polygon points="610.1,312.6 619.8,311.1 608.7,293.9 599.2,295.8" fill="#958476" stroke="#958476" stroke-width="0.7"/>
<polygon points="539.0,595.7 547.0,600.9 563.7,590.6 555.3,585.7" fill="#c87524" stroke="#c87524" stroke-width="0.7"/>
<polygon points="599.2,295.8 608.7,293.9 595.2,283.2 586.1,285.3" fill="#957683" stroke="#957683" stroke-width="0.7"/>
<polygon points="523.1,598.9 530.7,604.2 547.0,600.9 539.0,595.7" fill="#bb6421" stroke="#bb6421" stroke-width="0.7"/>
<polygon points="586.1,285.3 595.2,283.2 580.0,279.4 571.2,281.6" fill="#956d89" stroke="#956d89" stroke-width="0.7"/>
<polygon points="508.2,595.2 515.5,600.4 530.7,604.2 523.1,598.9" fill="#b1541e" stroke="#b1541e" stroke-width="0.7"/>
<polygon points="571.2,281.6 580.0,279.4 563.7,282.7 555.3,284.9" fill="#956490" stroke="#956490" stroke-width="0.7"/>
<polygon points="495.0,584.8 502.0,589.7 515.5,600.4 508.2,595.2" fill="#95371b" stroke="#95371b" stroke-width="0.7"/>
<polygon points="555.3,284.9 563.7,282.7 547.0,293.0 539.0,294.9" fill="#e88eea" stroke="#e88eea" stroke-width="0.7"/>
<polygon points="484.2,568.0 490.5,572.3 490.9,572.7 502.0,589.7 495.0,584.8" fill="#95241e" stroke="#95241e" stroke-width="0.7"/>
<polygon points="490.5,572.3 484.2,568.0 482.7,564.1" fill="#961721" stroke="#961721" stroke-width="0.7"/>
<polygon points="539.0,294.9 547.0,293.0 530.7,309.8 523.1,311.3" fill="#e971f7" stroke="#e971f7" stroke-width="0.7"/>
<polygon points="523.1,311.3 530.7,309.8 515.5,332.3 508.2,333.3" fill="#e752f7" stroke="#e752f7" stroke-width="0.7"/>
<polygon points="508.2,333.3 515.5,332.3 502.0,359.7 495.0,360.0" fill="#e241ec" stroke="#e241ec" stroke-width="0.7"/>
<polygon points="495.0,360.0 502.0,359.7 490.9,390.4 490.5,390.6 484.2,390.2" fill="#db39d6" stroke="#db39d6" stroke-width="0.7"/>
<polygon points="484.2,390.2 490.5,390.6 482.7,395.8" fill="#d230c0" stroke="#d230c0" stroke-width="0.7"/>
<polygon points="628.1,459.9 638.8,462.0 644.1,426.9 633.3,425.9" fill="#9a9e44" stroke="#9a9e44" stroke-width="0.7"/>
<polygon points="619.8,493.0 630.2,496.3 638.8,462.0 628.1,459.9" fill="#a09f3e" stroke="#a09f3e" stroke-width="0.7"/>
<polygon points="633.3,425.9 644.1,426.9 645.9,392.6 635.0,392.7" fill="#9aa14b" stroke="#9aa14b" stroke-width="0.7"/>
<polygon points="608.7,524.0 618.6,528.2 630.2,496.3 619.8,493.0" fill="#b19d39" stroke="#b19d39" stroke-width="0.7"/>
<polygon points="635.0,392.7 645.9,392.6 644.1,360.4 633.3,361.6" fill="#9aa054" stroke="#9aa054" stroke-width="0.7"/>
<polygon points="595.2,551.3 604.7,556.5 618.6,528.2 608.7,524.0" fill="#c19731" stroke="#c19731" stroke-width="0.7"/>
<polygon points="633.3,361.6 644.1,360.4 638.8,331.9 628.1,334.0" fill="#9a9a5f" stroke="#9a9a5f" stroke-width="0.7"/>
<polygon points="580.0,573.8 589.0,579.8 604.7,556.5 595.2,551.3" fill="#ce8f2b" stroke="#ce8f2b" stroke-width="0.7"/>
<polygon points="628.1,334.0 638.8,331.9 630.2,308.2 619.8,311.1" fill="#9a936a" stroke="#9a936a" stroke-width="0.7"/>
<polygon points="563.7,590.6 572.1,597.1 589.0,579.8 580.0,573.8" fill="#cb8027" stroke="#cb8027" stroke-width="0.7"/>
<polygon points="619.8,311.1 630.2,308.2 618.6,290.5 608.7,293.9" fill="#9a8476" stroke="#9a8476" stroke-width="0.7"/>
<polygon points="547.0,600.9 554.9,607.7 572.1,597.1 563.7,590.6" fill="#c16e22" stroke="#c16e22" stroke-width="0.7"/>
<polygon points="608.7,293.9 618.6,290.5 604.7,279.4 595.2,283.2" fill="#9a7683" stroke="#9a7683" stroke-width="0.7"/>
<polygon points="530.7,604.2 538.1,611.2 554.9,607.7 547.0,600.9" fill="#b55d1f" stroke="#b55d1f" stroke-width="0.7"/>
<polygon points="595.2,283.2 604.7,279.4 589.0,275.5 580.0,279.4" fill="#9a6d89" stroke="#9a6d89" stroke-width="0.7"/>
<polygon points="515.5,600.4 522.3,607.3 538.1,611.2 530.7,604.2" fill="#ab4e1c" stroke="#ab4e1c" stroke-width="0.7"/>
<polygon points="580.0,279.4 589.0,275.5 572.1,278.9 563.7,282.7" fill="#9a6490" stroke="#9a6490" stroke-width="0.7"/>
<polygon points="502.0,589.7 508.4,596.2 522.3,607.3 515.5,600.4" fill="#a33a1d" stroke="#a33a1d" stroke-width="0.7"/>
<polygon points="563.7,282.7 572.1,278.9 554.9,289.5 547.0,293.0" fill="#f590ee" stroke="#f590ee" stroke-width="0.7"/>
<polygon points="499.1,581.9 508.4,596.2 502.0,589.7 490.9,572.7" fill="#9b241e" stroke="#9b241e" stroke-width="0.7"/>
<polygon points="547.0,293.0 554.9,289.5 538.1,306.9 530.7,309.8" fill="#f572fb" stroke="#f572fb" stroke-width="0.7"/>
<polygon points="530.7,309.8 538.1,306.9 522.3,330.2 515.5,332.3" fill="#f454fc" stroke="#f454fc" stroke-width="0.7"/>
<polygon points="515.5,332.3 522.3,330.2 508.4,358.4 502.0,359.7" fill="#ef42f0" stroke="#ef42f0" stroke-width="0.7"/>
<polygon points="502.0,359.7 508.4,358.4 499.1,384.2 490.9,390.4" fill="#e93adb" stroke="#e93adb" stroke-width="0.7"/>
<polygon points="638.8,462.0 649.3,464.1 654.8,427.9 644.1,426.9" fill="#a09e44" stroke="#a09e44" stroke-width="0.7"/>
<polygon points="630.2,496.3 640.5,499.5 649.3,464.1 638.8,462.0" fill="#a7a03e" stroke="#a7a03e" stroke-width="0.7"/>
<polygon points="644.1,426.9 654.8,427.9 656.7,392.5 645.9,392.6" fill="#a0a14b" stroke="#a0a14b" stroke-width="0.7"/>
<polygon points="618.6,528.2 628.6,532.5 640.5,499.5 630.2,496.3" fill="#b89e39" stroke="#b89e39" stroke-width="0.7"/>
<polygon points="645.9,392.6 656.7,392.5 654.8,359.3 644.1,360.4" fill="#a0a054" stroke="#a0a054" stroke-width="0.7"/>
<polygon points="604.7,556.5 614.2,561.6 628.6,532.5 618.6,528.2" fill="#c99832" stroke="#c99832" stroke-width="0.7"/>
<polygon points="644.1,360.4 654.8,359.3 649.3,329.9 638.8,331.9" fill="#a09a5f" stroke="#a09a5f" stroke-width="0.7"/>
<polygon points="589.0,579.8 598.0,585.6 614.2,561.6 604.7,556.5" fill="#d7902c" stroke="#d7902c" stroke-width="0.7"/>
<polygon points="638.8,331.9 649.3,329.9 640.5,305.5 630.2,308.2" fill="#a0936a" stroke="#a0936a" stroke-width="0.7"/>
<polygon points="572.1,597.1 580.6,603.5 598.0,585.6 589.0,579.8" fill="#d38127" stroke="#d38127" stroke-width="0.7"/>
<polygon points="630.2,308.2 640.5,305.5 628.6,287.2 618.6,290.5" fill="#a08476" stroke="#a08476" stroke-width="0.7"/>
<polygon points="554.9,607.7 562.8,614.5 580.6,603.5 572.1,597.1" fill="#c96e22" stroke="#c96e22" stroke-width="0.7"/>
<polygon points="618.6,290.5 628.6,287.2 614.2,275.8 604.7,279.4" fill="#a07683" stroke="#a07683" stroke-width="0.7"/>
<polygon points="538.1,611.2 545.5,618.0 562.8,614.5 554.9,607.7" fill="#bd5d1f" stroke="#bd5d1f" stroke-width="0.7"/>
<polygon points="604.7,279.4 614.2,275.8 598.0,271.7 589.0,275.5" fill="#a06d89" stroke="#a06d89" stroke-width="0.7"/>
<polygon points="522.3,607.3 529.2,614.0 545.5,618.0 538.1,611.2" fill="#b24f1c" stroke="#b24f1c" stroke-width="0.7"/>
<polygon points="589.0,275.5 598.0,271.7 580.6,275.3 572.1,278.9" fill="#a06490" stroke="#a06490" stroke-width="0.7"/>
<polygon points="508.4,596.2 514.9,602.6 529.2,614.0 522.3,607.3" fill="#aa3b1d" stroke="#aa3b1d" stroke-width="0.7"/>
<polygon points="572.1,278.9 580.6,275.3 562.8,286.2 554.9,289.5" fill="#fd90ed" stroke="#fd90ed" stroke-width="0.7"/>
<polygon points="507.3,590.9 514.9,602.6 508.4,596.2 499.1,581.9" fill="#a0241e" stroke="#a0241e" stroke-width="0.7"/>
<polygon points="554.9,289.5 562.8,286.2 545.5,304.1 538.1,306.9" fill="#fe72fb" stroke="#fe72fb" stroke-width="0.7"/>
<polygon points="538.1,306.9 545.5,304.1 529.2,328.1 522.3,330.2" fill="#fc54fb" stroke="#fc54fb" stroke-width="0.7"/>
<polygon points="522.3,330.2 529.2,328.1 514.9,357.3 508.4,358.4" fill="#f842f0" stroke="#f842f0" stroke-width="0.7"/>
<polygon points="508.4,358.4 514.9,357.3 507.3,378.2 499.1,384.2" fill="#f13adb" stroke="#f13adb" stroke-width="0.7"/>
<polygon points="649.3,464.1 659.1,466.1 664.7,429.1 654.8,427.9" fill="#aca546" stroke="#aca546" stroke-width="0.7"/>
<polygon points="640.5,499.5 650.1,502.2 659.1,466.1 649.3,464.1" fill="#b9ac43" stroke="#b9ac43" stroke-width="0.7"/>
<polygon points="654.8,427.9 664.7,429.1 666.6,392.9 656.7,392.5" fill="#a5a14b" stroke="#a5a14b" stroke-width="0.7"/>
<polygon points="628.6,532.5 637.9,535.8 650.1,502.2 640.5,499.5" fill="#cdaa3d" stroke="#cdaa3d" stroke-width="0.7"/>
<polygon points="656.7,392.5 666.6,392.9 664.7,359.1 654.8,359.3" fill="#a5a054" stroke="#a5a054" stroke-width="0.7"/>
<polygon points="614.2,561.6 623.3,565.5 637.9,535.8 628.6,532.5" fill="#dfa335" stroke="#dfa335" stroke-width="0.7"/>
<polygon points="654.8,359.3 664.7,359.1 659.1,329.0 649.3,329.9" fill="#a59a5f" stroke="#a59a5f" stroke-width="0.7"/>
<polygon points="598.0,585.6 606.7,590.1 623.3,565.5 614.2,561.6" fill="#ee9a2f" stroke="#ee9a2f" stroke-width="0.7"/>
<polygon points="649.3,329.9 659.1,329.0 650.1,304.1 640.5,305.5" fill="#a5936a" stroke="#a5936a" stroke-width="0.7"/>
<polygon points="580.6,603.5 589.0,608.3 606.7,590.1 598.0,585.6" fill="#eb8a2a" stroke="#eb8a2a" stroke-width="0.7"/>
<polygon points="640.5,305.5 650.1,304.1 637.9,285.4 628.6,287.2" fill="#a58476" stroke="#a58476" stroke-width="0.7"/>
<polygon points="562.8,614.5 570.8,619.5 589.0,608.3 580.6,603.5" fill="#e07624" stroke="#e07624" stroke-width="0.7"/>
<polygon points="628.6,287.2 637.9,285.4 623.3,273.8 614.2,275.8" fill="#a57683" stroke="#a57683" stroke-width="0.7"/>
<polygon points="545.5,618.0 553.1,623.1 570.8,619.5 562.8,614.5" fill="#d26421" stroke="#d26421" stroke-width="0.7"/>
<polygon points="614.2,275.8 623.3,273.8 606.7,269.7 598.0,271.7" fill="#a56d89" stroke="#a56d89" stroke-width="0.7"/>
<polygon points="529.2,614.0 536.5,619.0 553.1,623.1 545.5,618.0" fill="#c6551f" stroke="#c6551f" stroke-width="0.7"/>
<polygon points="598.0,271.7 606.7,269.7 589.0,273.3 580.6,275.3" fill="#a56490" stroke="#a56490" stroke-width="0.7"/>
<polygon points="514.9,602.6 521.9,607.4 536.5,619.0 529.2,614.0" fill="#a5371b" stroke="#a5371b" stroke-width="0.7"/>
<polygon points="580.6,275.3 589.0,273.3 570.8,284.5 562.8,286.2" fill="#ff8de9" stroke="#ff8de9" stroke-width="0.7"/>
<polygon points="515.5,597.5 521.9,607.4 514.9,602.6 507.3,590.9" fill="#a5241e" stroke="#a5241e" stroke-width="0.7"/>
<polygon points="562.8,286.2 570.8,284.5 553.1,302.7 545.5,304.1" fill="#ff70f6" stroke="#ff70f6" stroke-width="0.7"/>
<polygon points="545.5,304.1 553.1,302.7 536.5,327.3 529.2,328.1" fill="#ff52f7" stroke="#ff52f7" stroke-width="0.7"/>
<polygon points="529.2,328.1 536.5,327.3 521.9,357.0 514.9,357.3" fill="#fb41eb" stroke="#fb41eb" stroke-width="0.7"/>
<polygon points="514.9,357.3 521.9,357.0 515.5,374.7 507.3,378.2" fill="#f439d6" stroke="#f439d6" stroke-width="0.7"/>
<path d="M188.8 233.9L548.0 301.1" stroke="#585858" stroke-width="0.9" fill="none"/>
<path d="M188.8 233.9L387.1 111.7" stroke="#585858" stroke-width="0.9" fill="none"/>
<path d="M548.0 301.1L746.3 178.8" stroke="#585858" stroke-width="0.9" fill="none"/>
<path d="M387.1 111.7L746.3 178.8" stroke="#585858" stroke-width="0.9" fill="none"/>
<path d="M188.8 667.5L188.8 233.9" stroke="#585858" stroke-width="0.9" fill="none"/>
<path d="M548.0 734.6L548.0 301.1" stroke="#585858" stroke-width="0.9" fill="none"/>
<path d="M746.3 612.3L746.3 178.8" stroke="#585858" stroke-width="0.9" fill="none"/>
<path d="M188.8 667.5L548.0 734.6" stroke="#585858" stroke-width="0.9" fill="none"/>
<path d="M548.0 734.6L746.3 612.3" stroke="#585858" stroke-width="0.9" fill="none"/>
<path d="M253.2 385.4L406.5 414.0" stroke="#e01414" stroke-width="1.5" fill="none"/>
<path d="M468.6 425.6L598.7 449.9" stroke="#e01414" stroke-width="1.5" fill="none"/>
<path d="M613.9 452.7L597.0 453.0L598.2 446.5Z" fill="#e01414"/>
<ellipse cx="262.0" cy="387.0" rx="1.8" ry="2.4" fill="#c81010"/>
<ellipse cx="290.9" cy="392.4" rx="1.8" ry="2.4" fill="#c81010"/>
<ellipse cx="319.8" cy="397.8" rx="1.8" ry="2.4" fill="#c81010"/>
<ellipse cx="348.7" cy="403.2" rx="1.8" ry="2.4" fill="#c81010"/>
<ellipse cx="377.6" cy="408.6" rx="1.8" ry="2.4" fill="#c81010"/>
<ellipse cx="493.2" cy="430.2" rx="1.8" ry="2.4" fill="#c81010"/>
<ellipse cx="522.1" cy="435.6" rx="1.8" ry="2.4" fill="#c81010"/>
<ellipse cx="551.0" cy="441.0" rx="1.8" ry="2.4" fill="#c81010"/>
<ellipse cx="579.9" cy="446.4" rx="1.8" ry="2.4" fill="#c81010"/>
<text x="257.2" y="400.2" font-size="9" fill="#e01414" text-anchor="middle">-10</text>
<text x="286.1" y="405.6" font-size="9" fill="#e01414" text-anchor="middle">-8</text>
<text x="315.0" y="411.0" font-size="9" fill="#e01414" text-anchor="middle">-6</text>
<text x="343.9" y="416.4" font-size="9" fill="#e01414" text-anchor="middle">-4</text>
<text x="372.8" y="421.8" font-size="9" fill="#e01414" text-anchor="middle">-2</text>
<text x="403.0" y="428.3" font-size="9" fill="#e01414" text-anchor="middle">0</text>
<text x="430.6" y="432.6" font-size="9" fill="#e01414" text-anchor="middle">2</text>
<text x="459.5" y="438.0" font-size="9" fill="#e01414" text-anchor="middle">4</text>
<text x="488.4" y="443.4" font-size="9" fill="#e01414" text-anchor="middle">6</text>
<text x="517.3" y="448.8" font-size="9" fill="#e01414" text-anchor="middle">8</text>
<text x="546.2" y="454.2" font-size="9" fill="#e01414" text-anchor="middle">10</text>
<text x="575.1" y="459.6" font-size="9" fill="#e01414" text-anchor="middle">12</text>
<text x="604.0" y="465.0" font-size="9" fill="#e01414" text-anchor="middle">14</text>
<text x="602.3" y="443.8" font-size="9" fill="#e01414" text-anchor="middle">x</text>
<path d="M342.1 453.7L406.5 414.0" stroke="#0b6a0b" stroke-width="1.5" fill="none"/>
<circle cx="358.6" cy="443.5" r="2.4" fill="#0b6a0b"/>
<circle cx="374.6" cy="433.7" r="2.4" fill="#0b6a0b"/>
<circle cx="390.5" cy="423.8" r="2.4" fill="#0b6a0b"/>
<text x="335.9" y="450.4" font-size="9" fill="#0b6a0b" text-anchor="middle">-8</text>
<text x="351.8" y="440.5" font-size="9" fill="#0b6a0b" text-anchor="middle">-6</text>
<text x="367.8" y="430.7" font-size="9" fill="#0b6a0b" text-anchor="middle">-4</text>
<text x="383.7" y="420.8" font-size="9" fill="#0b6a0b" text-anchor="middle">-2</text>
<text x="402.0" y="411.5" font-size="9" fill="#0b6a0b" text-anchor="middle">0</text>
<text x="418.1" y="401.7" font-size="8" fill="#d8f0d8" text-anchor="middle" fill-opacity="0.9">2</text>
<text x="434.0" y="391.8" font-size="8" fill="#d8f0d8" text-anchor="middle" fill-opacity="0.9">4</text>
<text x="450.0" y="382.0" font-size="8" fill="#d8f0d8" text-anchor="middle" fill-opacity="0.9">6</text>
<path d="M406.5 578.3L406.5 656.4" stroke="#1212d8" stroke-width="1.5" fill="none"/>
<ellipse cx="406.5" cy="600.0" rx="3" ry="1.7" fill="#1212d8"/>
<ellipse cx="406.5" cy="631.0" rx="3" ry="1.7" fill="#1212d8"/>
<text x="402.0" y="391.0" font-size="9" fill="#1212d8" text-anchor="end">2</text>
<text x="402.0" y="453.0" font-size="9" fill="#1212d8" text-anchor="end">-2</text>
<text x="402.0" y="484.0" font-size="9" fill="#1212d8" text-anchor="end">-4</text>
<text x="402.0" y="515.0" font-size="9" fill="#1212d8" text-anchor="end">-6</text>
<text x="402.0" y="546.0" font-size="9" fill="#1212d8" text-anchor="end">-8</text>
<text x="402.0" y="608.0" font-size="9" fill="#1212d8" text-anchor="end">-12</text>
<text x="402.0" y="639.0" font-size="9" fill="#1212d8" text-anchor="end">-14</text>
<text x="398.0" y="422.3" font-size="9" fill="#1212d8" text-anchor="middle">0</text>
<path d="M406.5 240V252.5" stroke="#1212d8" stroke-width="1.5"/>
<path d="M406.5 224.3L402.9 240.5L410.1 240.5Z" fill="#1212d8"/>
<text x="401.0" y="236.5" font-size="9" fill="#dfe4ff" text-anchor="end">12</text>
<text x="418.0" y="238.0" font-size="9" fill="#b8c4ff" text-anchor="middle">z</text>
</svg></div></div><div class="abs" style="left:759px;top:60px;width:3px;height:690px;background:#f4f4f4"></div><div class="abs" style="left:762px;top:60px;width:1px;height:690px;background:#7c7c7c"></div>
<!-- right panel -->
<div class="pt" style="left:763px;width:259px"><svg class="dd" width="8" height="5" viewBox="0 0 8 5"><path d="M0 0.3H8L4 4.6Z" fill="#555"/></svg><span>Grafik 2</span><div class="cl" style="left:245px"><svg width="9" height="9" viewBox="0 0 9 9"><path d="M1.5 1.5L7.5 7.5M7.5 1.5L1.5 7.5" stroke="#333" stroke-width="0.95"/></svg></div></div><div class="hline" style="left:763px;top:74px;width:259px"></div><div class="sb" style="left:763px;width:259px"></div><svg class="si" style="left:767px" width="14" height="14" viewBox="0 0 14 14"><rect x="1" y="0" width="13" height="13" fill="#fff"/><path d="M3.5 0V14M0 10.5H14" stroke="#222" stroke-width="1.1" fill="none"/></svg><svg class="si" style="left:786px" width="14" height="14" viewBox="0 0 14 14"><path d="M2.5 0V14M6 0V14M9.5 0V14M13 0V14M0 2.5H14M0 6H14M0 9.5H14M0 13H14" stroke="#333" stroke-width="1" fill="none"/></svg><svg class="si" style="left:807px;top:81px" width="9" height="9" viewBox="0 0 9 9"><path d="M8.5 1.5H4A3 3 0 0 0 4 7.5H8.5" stroke="#e02a2a" stroke-width="2.3" fill="none"/></svg><svg class="si" style="left:821px;top:84px" width="7" height="4" viewBox="0 0 7 4"><path d="M0 0H7L3.5 3.8Z" fill="#555"/></svg><div class="hline" style="left:763px;top:96px;width:259px"></div><div class="abs" style="left:763px;top:97px;width:259px;height:653px;background:#fff;overflow:hidden"><div class="abs" style="left:-763px;top:-97px;width:1024px;height:750px;">
<style>.t2{position:absolute;white-space:nowrap;line-height:1;color:#222;}</style>
<svg class="abs" style="left:0;top:0" width="1024" height="750" viewBox="0 0 1024 750">
<path d="M794.0 318.8 L795.1 313.3 L796.1 308.2 L797.2 303.4 L798.2 299.0 L799.3 294.9 L800.3 291.3 L801.4 288.1 L802.5 285.4 L803.5 283.1 L804.6 281.2 L805.6 279.7 L806.7 278.7 L807.8 278.1 L808.8 277.8 L809.9 277.9 L810.9 278.3 L812.0 278.9 L813.0 279.9 L814.1 281.0 L815.2 282.4 L816.2 283.8 L817.3 285.4 L818.3 287.1 L819.4 288.9 L820.4 290.6 L821.5 292.4 L822.6 294.1 L823.6 295.8 L824.7 297.4 L825.7 298.9 L826.8 300.3 L827.9 301.6 L828.9 302.7 L830.0 303.7 L831.0 304.5 L832.1 305.3 L833.1 305.8 L834.2 306.2 L835.3 306.5 L836.3 306.7 L837.4 306.7 L838.4 306.7 L839.5 306.5 L840.6 306.3 L841.6 306.0 L842.7 305.6 L843.7 305.2 L844.8 304.8 L845.8 304.4 L846.9 304.0 L848.0 303.5 L849.0 303.2 L850.1 302.8 L851.1 302.5 L852.2 302.3 L853.2 302.1 L854.3 302.0 L855.4 301.9 L856.4 301.9 L857.5 302.0 L858.5 302.2 L859.6 302.5 L860.7 302.8 L861.7 303.2 L862.8 303.6 L863.8 304.1 L864.9 304.6 L865.9 305.2 L867.0 305.8 L868.1 306.4 L869.1 307.0 L870.2 307.7 L871.2 308.3 L872.3 308.8 L873.4 309.4 L874.4 309.9 L875.5 310.3 L876.5 310.7 L877.6 311.0 L878.6 311.3 L879.7 311.5 L880.8 311.6 L881.8 311.6 L882.9 311.5 L883.9 311.4 L885.0 311.1 L886.0 310.8 L887.1 310.4 L888.2 309.9 L889.2 309.4 L890.3 308.7 L891.3 308.1 L892.4 307.3 L893.5 306.6 L894.5 305.7 L895.6 304.9 L896.6 304.1 L897.7 303.2 L898.7 302.4 L899.8 301.5 L900.9 300.7 L901.9 299.9 L903.0 299.2 L904.0 298.5 L905.1 297.8 L906.1 297.2 L907.2 296.7 L908.3 296.3 L909.3 295.9 L910.4 295.7 L911.4 295.5 L912.5 295.4 L913.6 295.4 L914.6 295.4 L915.7 295.6 L916.7 295.9 L917.8 296.2 L918.8 296.6 L919.9 297.1 L921.0 297.6 L922.0 298.2 L923.1 298.9 L924.1 299.6 L925.2 300.3 L926.2 301.1 L927.3 301.9 L928.4 302.7 L929.4 303.5 L930.5 304.3 L931.5 305.1 L932.6 305.9 L933.7 306.7 L934.7 307.4 L935.8 308.0 L936.8 308.7 L937.9 309.2 L938.9 309.7 L940.0 310.2 L941.1 310.5 L942.1 310.8 L943.2 311.1 L944.2 311.2 L945.3 311.3 L946.4 311.3 L947.4 311.2 L948.5 311.1 L949.5 310.9 L950.6 310.6 L951.6 310.2 L952.7 309.8 L953.8 309.4 L954.8 308.9 L955.9 308.3 L956.9 307.8 L958.0 307.2 L959.0 306.5 L960.1 305.9 L961.2 305.2 L962.2 304.6 L963.3 303.9 L964.3 303.3 L965.4 302.7 L966.5 302.1 L967.5 301.5 L968.6 301.0 L969.6 300.5 L970.7 300.0 L971.7 299.7 L972.8 299.3 L973.9 299.0 L973.9 529.4 L972.8 529.1 L971.7 528.7 L970.7 528.4 L969.6 527.9 L968.6 527.4 L967.5 526.9 L966.5 526.3 L965.4 525.7 L964.3 525.1 L963.3 524.5 L962.2 523.8 L961.2 523.2 L960.1 522.5 L959.0 521.9 L958.0 521.2 L956.9 520.6 L955.9 520.1 L954.8 519.5 L953.8 519.0 L952.7 518.6 L951.6 518.2 L950.6 517.8 L949.5 517.5 L948.5 517.3 L947.4 517.2 L946.4 517.1 L945.3 517.1 L944.2 517.2 L943.2 517.3 L942.1 517.6 L941.1 517.9 L940.0 518.2 L938.9 518.7 L937.9 519.2 L936.8 519.7 L935.8 520.4 L934.7 521.0 L933.7 521.7 L932.6 522.5 L931.5 523.3 L930.5 524.1 L929.4 524.9 L928.4 525.7 L927.3 526.5 L926.2 527.3 L925.2 528.1 L924.1 528.8 L923.1 529.5 L922.0 530.2 L921.0 530.8 L919.9 531.3 L918.8 531.8 L917.8 532.2 L916.7 532.5 L915.7 532.8 L914.6 533.0 L913.6 533.0 L912.5 533.0 L911.4 532.9 L910.4 532.7 L909.3 532.5 L908.3 532.1 L907.2 531.7 L906.1 531.2 L905.1 530.6 L904.0 529.9 L903.0 529.2 L901.9 528.5 L900.9 527.7 L899.8 526.9 L898.7 526.0 L897.7 525.2 L896.6 524.3 L895.6 523.5 L894.5 522.7 L893.5 521.8 L892.4 521.1 L891.3 520.3 L890.3 519.7 L889.2 519.0 L888.2 518.5 L887.1 518.0 L886.0 517.6 L885.0 517.3 L883.9 517.0 L882.9 516.9 L881.8 516.8 L880.8 516.8 L879.7 516.9 L878.6 517.1 L877.6 517.4 L876.5 517.7 L875.5 518.1 L874.4 518.5 L873.4 519.0 L872.3 519.6 L871.2 520.1 L870.2 520.7 L869.1 521.4 L868.1 522.0 L867.0 522.6 L865.9 523.2 L864.9 523.8 L863.8 524.3 L862.8 524.8 L861.7 525.2 L860.7 525.6 L859.6 525.9 L858.5 526.2 L857.5 526.4 L856.4 526.5 L855.4 526.5 L854.3 526.4 L853.2 526.3 L852.2 526.1 L851.1 525.9 L850.1 525.6 L849.0 525.2 L848.0 524.9 L846.9 524.4 L845.8 524.0 L844.8 523.6 L843.7 523.2 L842.7 522.8 L841.6 522.4 L840.6 522.1 L839.5 521.9 L838.4 521.7 L837.4 521.7 L836.3 521.7 L835.3 521.9 L834.2 522.2 L833.1 522.6 L832.1 523.1 L831.0 523.9 L830.0 524.7 L828.9 525.7 L827.9 526.8 L826.8 528.1 L825.7 529.5 L824.7 531.0 L823.6 532.6 L822.6 534.3 L821.5 536.0 L820.4 537.8 L819.4 539.5 L818.3 541.3 L817.3 543.0 L816.2 544.6 L815.2 546.0 L814.1 547.4 L813.0 548.5 L812.0 549.5 L810.9 550.1 L809.9 550.5 L808.8 550.6 L807.8 550.3 L806.7 549.7 L805.6 548.7 L804.6 547.2 L803.5 545.3 L802.5 543.0 L801.4 540.3 L800.3 537.1 L799.3 533.5 L798.2 529.4 L797.2 525.0 L796.1 520.2 L795.1 515.1 L794.0 509.6Z" fill="#e6e6e6"/>
<rect x="889.3" y="307.7" width="5.2" height="213.0" fill="#a2d9d9"/>
<path d="M846.5 99V750" stroke="#111" stroke-width="1.4"/>
<path d="M843.8 102.5L846.5 98.3L849.2 102.5" stroke="#111" stroke-width="1" fill="none"/>
<path d="M763 414.5H1021" stroke="#333" stroke-width="1"/>
<path d="M1017 411.5L1021.5 414.5L1017 417.5" stroke="#333" stroke-width="1" fill="none"/>
<path d="M843 202.5H846" stroke="#111" stroke-width="1"/>
<path d="M843 255.5H846" stroke="#111" stroke-width="1"/>
<path d="M843 308.5H846" stroke="#111" stroke-width="1"/>
<path d="M843 361.5H846" stroke="#111" stroke-width="1"/>
<path d="M843 467.5H846" stroke="#111" stroke-width="1"/>
<path d="M843 520.5H846" stroke="#111" stroke-width="1"/>
<path d="M843 573.5H846" stroke="#111" stroke-width="1"/>
<path d="M843 626.5H846" stroke="#111" stroke-width="1"/>
<path d="M794.5 415V418" stroke="#333" stroke-width="1"/>
<path d="M900.5 415V418" stroke="#333" stroke-width="1"/>
<path d="M953.5 415V418" stroke="#333" stroke-width="1"/>
<path d="M1006.5 415V418" stroke="#333" stroke-width="1"/>
<path d="M794.0 318.8V509.6" stroke="#7a3a10" stroke-width="2.6"/>
<path d="M794.2 318.8V509.6" stroke="#e07a10" stroke-width="1.1"/>
<path d="M973.9 299.0V529.4" stroke="#7a3a10" stroke-width="2.6"/>
<path d="M974.1 299.0V529.4" stroke="#e07a10" stroke-width="1.1"/>
<path d="M794.0 318.8 L795.1 313.3 L796.1 308.2 L797.2 303.4 L798.2 299.0 L799.3 294.9 L800.3 291.3 L801.4 288.1 L802.5 285.4 L803.5 283.1 L804.6 281.2 L805.6 279.7 L806.7 278.7 L807.8 278.1 L808.8 277.8 L809.9 277.9 L810.9 278.3 L812.0 278.9 L813.0 279.9 L814.1 281.0 L815.2 282.4 L816.2 283.8 L817.3 285.4 L818.3 287.1 L819.4 288.9 L820.4 290.6 L821.5 292.4 L822.6 294.1 L823.6 295.8 L824.7 297.4 L825.7 298.9 L826.8 300.3 L827.9 301.6 L828.9 302.7 L830.0 303.7 L831.0 304.5 L832.1 305.3 L833.1 305.8 L834.2 306.2 L835.3 306.5 L836.3 306.7 L837.4 306.7 L838.4 306.7 L839.5 306.5 L840.6 306.3 L841.6 306.0 L842.7 305.6 L843.7 305.2 L844.8 304.8 L845.8 304.4 L846.9 304.0 L848.0 303.5 L849.0 303.2 L850.1 302.8 L851.1 302.5 L852.2 302.3 L853.2 302.1 L854.3 302.0 L855.4 301.9 L856.4 301.9 L857.5 302.0 L858.5 302.2 L859.6 302.5 L860.7 302.8 L861.7 303.2 L862.8 303.6 L863.8 304.1 L864.9 304.6 L865.9 305.2 L867.0 305.8 L868.1 306.4 L869.1 307.0 L870.2 307.7 L871.2 308.3 L872.3 308.8 L873.4 309.4 L874.4 309.9 L875.5 310.3 L876.5 310.7 L877.6 311.0 L878.6 311.3 L879.7 311.5 L880.8 311.6 L881.8 311.6 L882.9 311.5 L883.9 311.4 L885.0 311.1 L886.0 310.8 L887.1 310.4 L888.2 309.9 L889.2 309.4 L890.3 308.7 L891.3 308.1 L892.4 307.3 L893.5 306.6 L894.5 305.7 L895.6 304.9 L896.6 304.1 L897.7 303.2 L898.7 302.4 L899.8 301.5 L900.9 300.7 L901.9 299.9 L903.0 299.2 L904.0 298.5 L905.1 297.8 L906.1 297.2 L907.2 296.7 L908.3 296.3 L909.3 295.9 L910.4 295.7 L911.4 295.5 L912.5 295.4 L913.6 295.4 L914.6 295.4 L915.7 295.6 L916.7 295.9 L917.8 296.2 L918.8 296.6 L919.9 297.1 L921.0 297.6 L922.0 298.2 L923.1 298.9 L924.1 299.6 L925.2 300.3 L926.2 301.1 L927.3 301.9 L928.4 302.7 L929.4 303.5 L930.5 304.3 L931.5 305.1 L932.6 305.9 L933.7 306.7 L934.7 307.4 L935.8 308.0 L936.8 308.7 L937.9 309.2 L938.9 309.7 L940.0 310.2 L941.1 310.5 L942.1 310.8 L943.2 311.1 L944.2 311.2 L945.3 311.3 L946.4 311.3 L947.4 311.2 L948.5 311.1 L949.5 310.9 L950.6 310.6 L951.6 310.2 L952.7 309.8 L953.8 309.4 L954.8 308.9 L955.9 308.3 L956.9 307.8 L958.0 307.2 L959.0 306.5 L960.1 305.9 L961.2 305.2 L962.2 304.6 L963.3 303.9 L964.3 303.3 L965.4 302.7 L966.5 302.1 L967.5 301.5 L968.6 301.0 L969.6 300.5 L970.7 300.0 L971.7 299.7 L972.8 299.3 L973.9 299.0" fill="none" stroke="#7f0a1c" stroke-width="2" stroke-linejoin="round"/>
<path d="M794.0 509.6 L795.1 515.1 L796.1 520.2 L797.2 525.0 L798.2 529.4 L799.3 533.5 L800.3 537.1 L801.4 540.3 L802.5 543.0 L803.5 545.3 L804.6 547.2 L805.6 548.7 L806.7 549.7 L807.8 550.3 L808.8 550.6 L809.9 550.5 L810.9 550.1 L812.0 549.5 L813.0 548.5 L814.1 547.4 L815.2 546.0 L816.2 544.6 L817.3 543.0 L818.3 541.3 L819.4 539.5 L820.4 537.8 L821.5 536.0 L822.6 534.3 L823.6 532.6 L824.7 531.0 L825.7 529.5 L826.8 528.1 L827.9 526.8 L828.9 525.7 L830.0 524.7 L831.0 523.9 L832.1 523.1 L833.1 522.6 L834.2 522.2 L835.3 521.9 L836.3 521.7 L837.4 521.7 L838.4 521.7 L839.5 521.9 L840.6 522.1 L841.6 522.4 L842.7 522.8 L843.7 523.2 L844.8 523.6 L845.8 524.0 L846.9 524.4 L848.0 524.9 L849.0 525.2 L850.1 525.6 L851.1 525.9 L852.2 526.1 L853.2 526.3 L854.3 526.4 L855.4 526.5 L856.4 526.5 L857.5 526.4 L858.5 526.2 L859.6 525.9 L860.7 525.6 L861.7 525.2 L862.8 524.8 L863.8 524.3 L864.9 523.8 L865.9 523.2 L867.0 522.6 L868.1 522.0 L869.1 521.4 L870.2 520.7 L871.2 520.1 L872.3 519.6 L873.4 519.0 L874.4 518.5 L875.5 518.1 L876.5 517.7 L877.6 517.4 L878.6 517.1 L879.7 516.9 L880.8 516.8 L881.8 516.8 L882.9 516.9 L883.9 517.0 L885.0 517.3 L886.0 517.6 L887.1 518.0 L888.2 518.5 L889.2 519.0 L890.3 519.7 L891.3 520.3 L892.4 521.1 L893.5 521.8 L894.5 522.7 L895.6 523.5 L896.6 524.3 L897.7 525.2 L898.7 526.0 L899.8 526.9 L900.9 527.7 L901.9 528.5 L903.0 529.2 L904.0 529.9 L905.1 530.6 L906.1 531.2 L907.2 531.7 L908.3 532.1 L909.3 532.5 L910.4 532.7 L911.4 532.9 L912.5 533.0 L913.6 533.0 L914.6 533.0 L915.7 532.8 L916.7 532.5 L917.8 532.2 L918.8 531.8 L919.9 531.3 L921.0 530.8 L922.0 530.2 L923.1 529.5 L924.1 528.8 L925.2 528.1 L926.2 527.3 L927.3 526.5 L928.4 525.7 L929.4 524.9 L930.5 524.1 L931.5 523.3 L932.6 522.5 L933.7 521.7 L934.7 521.0 L935.8 520.4 L936.8 519.7 L937.9 519.2 L938.9 518.7 L940.0 518.2 L941.1 517.9 L942.1 517.6 L943.2 517.3 L944.2 517.2 L945.3 517.1 L946.4 517.1 L947.4 517.2 L948.5 517.3 L949.5 517.5 L950.6 517.8 L951.6 518.2 L952.7 518.6 L953.8 519.0 L954.8 519.5 L955.9 520.1 L956.9 520.6 L958.0 521.2 L959.0 521.9 L960.1 522.5 L961.2 523.2 L962.2 523.8 L963.3 524.5 L964.3 525.1 L965.4 525.7 L966.5 526.3 L967.5 526.9 L968.6 527.4 L969.6 527.9 L970.7 528.4 L971.7 528.7 L972.8 529.1 L973.9 529.4" fill="none" stroke="#7f0a1c" stroke-width="2" stroke-linejoin="round"/>
<circle cx="794.0" cy="318.8" r="2.7" fill="#444" stroke="#111" stroke-width="0.8"/>
<circle cx="794.0" cy="509.6" r="2.7" fill="#444" stroke="#111" stroke-width="0.8"/>
<circle cx="973.9" cy="299.0" r="2.7" fill="#444" stroke="#111" stroke-width="0.8"/>
<circle cx="973.9" cy="529.4" r="2.7" fill="#444" stroke="#111" stroke-width="0.8"/>
<circle cx="891.9" cy="307.7" r="2.6" fill="#1010e8" stroke="#111" stroke-width="0.8"/>
<circle cx="891.9" cy="520.7" r="2.6" fill="#1010e8" stroke="#111" stroke-width="0.8"/>
<circle cx="794.0" cy="414.2" r="4.2" fill="#e8102c" stroke="#3a0a10" stroke-width="0.9"/>
<circle cx="973.9" cy="414.2" r="4.2" fill="#e8102c" stroke="#3a0a10" stroke-width="0.9"/>
<path d="M882.8 408.8H901.2L892 424.8Z" fill="#7872fa"/>
<path d="M900 392V396.5M902 392.3H907.5M904 390.8L902 392.3L904 393.8M900 396.3H905.5M903.7 394.8L905.7 396.3L903.7 397.8M907.5 393V397.5" stroke="#6a6af0" stroke-width="0.8" fill="none"/>
<path d="M780.3 183.5H805.8" stroke="#111" stroke-width="1"/>
<circle cx="794.1" cy="183.5" r="2.8" fill="#111"/>
<path d="M886.6 180.5H912.1" stroke="#111" stroke-width="1"/>
<circle cx="900.1" cy="180.5" r="2.8" fill="#111"/>
<path d="M956.2 178.5H981.7" stroke="#111" stroke-width="1"/>
<circle cx="977.1" cy="178.5" r="2.8" fill="#111"/>
<path d="M770.1 265.5H811.4" stroke="#111" stroke-width="1"/>
<circle cx="784.2" cy="265.5" r="2.8" fill="#111"/>
<path d="M957.2 267.5H998.8" stroke="#111" stroke-width="1"/>
<circle cx="992.4" cy="267.5" r="2.8" fill="#111"/>
</svg>
<div class="abs" style="left:768px;top:104px;width:251px;height:56px;background:#fffacd"></div>
<div class="t2" style="left:771.5px;top:108.6px;font-size:11.5px;color:#1a1a1a">Volumen des Rotationskörpers der Funktion f(x)</div>
<div class="t2" style="left:771.5px;top:125.6px;font-size:11.5px;color:#1a1a1a;letter-spacing:0.04px">bei Rotation um die x − Achse</div>
<div class="t2" style="left:771.5px;top:141px;font-size:11.5px;color:#1a1a1a">f(x) = a <i style="font-family:'Liberation Serif';font-size:12.5px">e</i><span style="font-size:7.5px;position:relative;top:-5px;letter-spacing:0.1px">−bx</span> cos(x) x<span style="letter-spacing:1.2px"> + </span>c</div>
<div class="t2" style="left:780.8px;top:193.5px;font-size:9.6px">a = 0.4</div>
<div class="t2" style="left:887.1px;top:193px;font-size:9.6px">b = 0.18</div>
<div class="t2" style="left:952.9px;top:188.5px;font-size:9.6px">c = 10.4</div>
<div class="t2" style="left:779px;top:222px;font-size:9.2px">f(x)=</div>
<div class="abs" style="left:798px;top:217px;width:184px;height:18px;border:1px solid #a9a9a9;box-sizing:border-box;background:#fff"></div>
<div class="t2" style="left:801px;top:221.8px;font-size:9.5px;color:#111">a <i>e</i>^(-b x) cos(x) x + c</div>
<div class="t2" style="left:774.5px;top:247px;font-size:10.2px">x<span style="font-size:8px;position:relative;top:3.5px;letter-spacing:0.3px">min</span> = -5</div>
<div class="t2" style="left:964.5px;top:248.3px;font-size:10.2px">x<span style="font-size:8px;position:relative;top:3.5px;letter-spacing:0.3px">max</span> = 12</div>
<div class="t2" style="left:779.5px;top:286.5px;font-size:9.6px;color:#e61e4a">f(x)</div>
<div class="t2" style="left:776.5px;top:526.5px;font-size:9.6px;color:#e61e4a">-f(x)</div>
<div class="t2" style="left:797px;top:396.8px;font-size:10.5px;color:#e61e4a">x<span style="font-size:8.5px;position:relative;top:3.5px;letter-spacing:0.5px">min</span></div>
<div class="t2" style="left:976.7px;top:396.8px;font-size:10.5px;color:#e61e4a">x<span style="font-size:8.5px;position:relative;top:3.5px;letter-spacing:0.5px">max</span></div>
<div class="t2" style="left:800px;width:40.5px;text-align:right;top:197.0px;font-size:9.5px">20</div>
<div class="t2" style="left:800px;width:40.5px;text-align:right;top:250.0px;font-size:9.5px">15</div>
<div class="t2" style="left:800px;width:40.5px;text-align:right;top:303.0px;font-size:9.5px">10</div>
<div class="t2" style="left:800px;width:40.5px;text-align:right;top:356.0px;font-size:9.5px">5</div>
<div class="t2" style="left:800px;width:40.5px;text-align:right;top:404.2px;font-size:9.5px">0</div>
<div class="t2" style="left:800px;width:40.5px;text-align:right;top:462.0px;font-size:9.5px">-5</div>
<div class="t2" style="left:800px;width:40.5px;text-align:right;top:515.0px;font-size:9.5px">-10</div>
<div class="t2" style="left:800px;width:40.5px;text-align:right;top:568.0px;font-size:9.5px">-15</div>
<div class="t2" style="left:800px;width:40.5px;text-align:right;top:621.0px;font-size:9.5px">-20</div>
<div class="t2" style="left:779.2px;width:30px;text-align:center;top:417.3px;font-size:9.5px">-5</div>
<div class="t2" style="left:838.0px;width:30px;text-align:center;top:417.3px;font-size:9.5px">0</div>
<div class="t2" style="left:884.8px;width:30px;text-align:center;top:417.3px;font-size:9.5px">5</div>
<div class="t2" style="left:937.3px;width:30px;text-align:center;top:417.3px;font-size:9.5px">10</div>
<div class="t2" style="left:990.5px;width:30px;text-align:center;top:417.3px;font-size:9.5px">15</div>
<div class="abs" style="left:768.5px;top:628px;width:124px;height:21px;background:#ffecd6"></div>
<div class="t2" style="left:772.7px;top:629.8px;font-family:'Liberation Serif',serif;font-style:italic;font-size:13px;letter-spacing:0.13px;color:#2a2a2a">Volumenberechnung :</div>
<div class="abs" style="left:901px;top:627px;width:28px;height:19px;border:1px solid #767676;border-radius:3.5px;box-sizing:border-box;background:linear-gradient(#f8f8f8,#e6e6e6 45%,#d0d0d0 55%,#c6c6c6);font-size:10px;line-height:17px;text-align:center;color:#111">click</div>
<div class="abs" style="left:772.5px;top:655.5px;width:210px;height:39px;background:#fffacd"></div>
<div class="t2" style="left:775.7px;top:666px;font-family:'Liberation Serif',serif;font-size:13px;color:#1e1e1e;"><i>V</i></div>
<div class="t2" style="left:787px;top:666px;font-family:'Liberation Serif',serif;font-size:13px;color:#1e1e1e;">=</div>
<div class="t2" style="left:798.5px;top:666px;font-family:'Liberation Serif',serif;font-size:13px;color:#1e1e1e;"><i>π</i></div>
<div class="t2" style="left:808.8px;top:669.3px;font-family:'Liberation Serif',serif;font-size:10px;color:#1e1e1e;">∗</div>
<svg class="abs" style="left:816px;top:658px" width="16" height="32" viewBox="0 0 16 32"><path d="M13.2 2.6C12.6 1.4 10.6 1.4 10 4C9 9 8.4 14 7.4 20C6.8 24 6.2 28 5 29.4C4 30.4 2.8 29.8 2.6 28.8" fill="none" stroke="#1e1e1e" stroke-width="1.1" stroke-linecap="round"/><circle cx="13" cy="3" r="0.9" fill="#1e1e1e"/><circle cx="2.9" cy="28.6" r="0.9" fill="#1e1e1e"/></svg>
<div class="t2" style="left:830px;top:657.5px;font-family:'Liberation Serif',serif;font-size:8.5px;color:#1e1e1e;"><i>x<span style="font-size:6.5px;position:relative;top:1.5px">max</span></i></div>
<div class="t2" style="left:825.5px;top:681px;font-family:'Liberation Serif',serif;font-size:8.5px;color:#1e1e1e;"><i>x<span style="font-size:6.5px;position:relative;top:1.5px">min</span></i></div>
<div class="t2" style="left:852.2px;top:666px;font-family:'Liberation Serif',serif;font-size:13px;color:#1e1e1e;letter-spacing:0.7px"><i>f</i>(<i>x</i>)<span style="font-size:8.5px;position:relative;top:-5px">2</span></div>
<div class="t2" style="left:882.6px;top:669.3px;font-family:'Liberation Serif',serif;font-size:10px;color:#1e1e1e;">∗</div>
<div class="t2" style="left:890.5px;top:666px;font-family:'Liberation Serif',serif;font-size:13px;color:#1e1e1e;"><i>dx</i></div>
<div class="t2" style="left:908px;top:666px;font-family:'Liberation Serif',serif;font-size:13px;color:#1e1e1e;">=</div>
<div class="t2" style="left:920.3px;top:666.3px;font-family:'Liberation Serif',serif;font-size:12.6px;color:#1e1e1e;">6035.89</div>
<div class="t2" style="left:964.4px;top:666px;font-family:'Liberation Serif',serif;font-size:13px;color:#1e1e1e;"><i>VE</i></div>
<div class="abs" style="left:778.5px;top:716px;width:210.5px;height:20.5px;background:#ffecd6"></div>
<div class="t2" style="left:783px;top:717.8px;font-family:'Liberation Serif',serif;font-style:italic;font-weight:bold;font-size:13px;letter-spacing:0.72px;color:#1a1af0">Roman Chijner, Heidelberg, 2012</div>
</div></div><div class="abs" style="left:1022px;top:19px;width:1px;height:731px;background:#a0a0a0"></div><div class="abs" style="left:1023px;top:19px;width:1px;height:731px;background:#f0f0f0"></div>
</body></html>
